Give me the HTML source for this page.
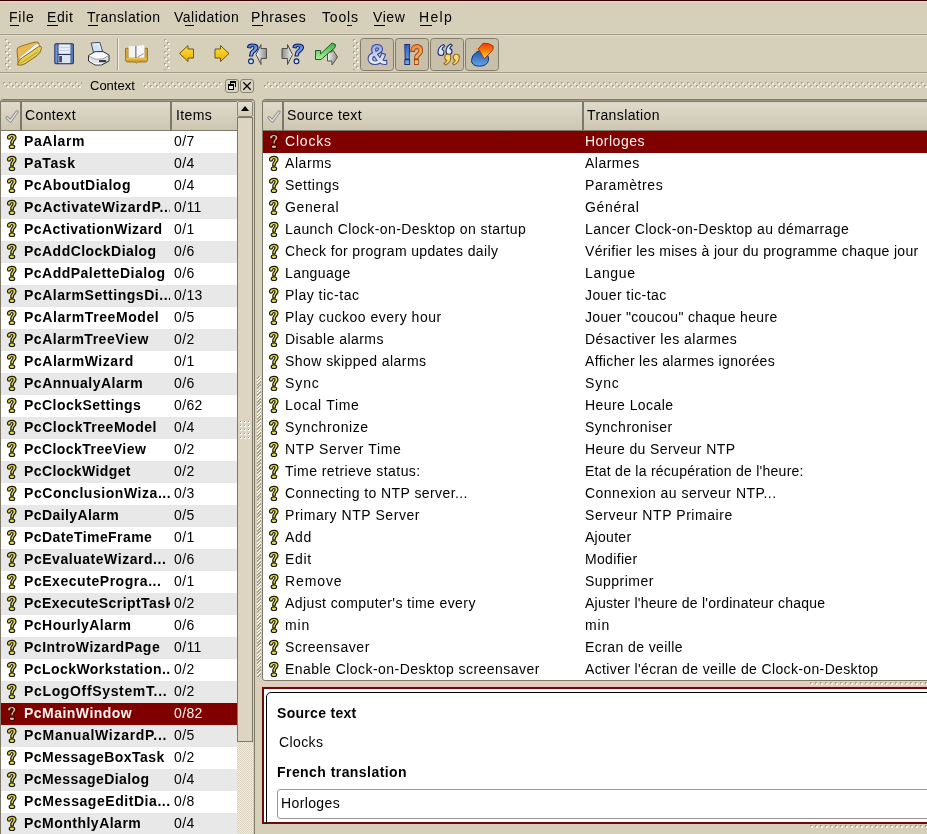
<!DOCTYPE html><html><head><meta charset="utf-8"><style>
*{box-sizing:border-box;margin:0;padding:0}
html,body{width:927px;height:834px;overflow:hidden;background:#d6cfba;font-family:"Liberation Sans",sans-serif;font-size:14px;color:#000}
.a{position:absolute}
.t{position:absolute;white-space:pre;letter-spacing:0.38px;line-height:16px}
.b{font-weight:bold;letter-spacing:0.44px}
.u{position:absolute;height:2px;background:#000}
svg{display:block}
.hd{position:absolute;background:linear-gradient(#e0dacb,#cdc6b2)}
</style></head><body><div id="root" style="position:absolute;left:0;top:0;width:927px;height:834px;overflow:hidden;background:#d6cfba;will-change:transform">
<div class="a" style="left:0;top:0px;width:927px;height:1px;background:#2e0000"></div>
<div class="a" style="left:0;top:1px;width:927px;height:1px;background:#f6d0c4"></div>
<div class="a" style="left:0;top:2px;width:927px;height:1px;background:#e8ccbc"></div>
<div class="a" style="left:0;top:3px;width:927px;height:1px;background:#dccbb8"></div>
<div class="a" style="left:0;top:4px;width:927px;height:1px;background:#d6cdb8"></div>
<div class="t" style="left:9px;top:9px;letter-spacing:0.78px">File</div>
<div class="t" style="left:47px;top:9px;letter-spacing:0.6px">Edit</div>
<div class="t" style="left:87px;top:9px;letter-spacing:0.42px">Translation</div>
<div class="t" style="left:174px;top:9px;letter-spacing:0.48px">Validation</div>
<div class="t" style="left:251px;top:9px;letter-spacing:0.55px">Phrases</div>
<div class="t" style="left:322px;top:9px;letter-spacing:0.8px">Tools</div>
<div class="t" style="left:373px;top:9px;letter-spacing:0.55px">View</div>
<div class="t" style="left:419px;top:9px;letter-spacing:1.3px">Help</div>
<div id="ul"></div>
<div class="a" style="left:0;top:33px;width:927px;height:1px;background:#dcd6c4"></div>
<div class="a" style="left:0;top:34px;width:927px;height:1px;background:#a29c88"></div>
<div class="a" style="left:0;top:35px;width:927px;height:1px;background:#e2dccb"></div>
<div class="a" style="left:0;top:72px;width:927px;height:1px;background:#a29c88"></div>
<div class="a" style="left:0;top:73px;width:927px;height:1px;background:#e2dccb"></div>
<svg class="a" style="left:0;top:0" width="927" height="99" viewBox="0 0 927 99">
<defs>
<pattern id="gripv1" x="5" y="39" width="12" height="6" patternUnits="userSpaceOnUse"><rect x="0" y="0" width="2" height="2" fill="#aaa48f"/><rect x="1" y="1" width="2" height="2" fill="#f2eee2"/><rect x="3" y="3" width="2" height="2" fill="#aaa48f"/><rect x="4" y="4" width="2" height="2" fill="#f2eee2"/></pattern>
<pattern id="gripv2" x="164" y="39" width="12" height="6" patternUnits="userSpaceOnUse"><rect x="0" y="0" width="2" height="2" fill="#aaa48f"/><rect x="1" y="1" width="2" height="2" fill="#f2eee2"/><rect x="3" y="3" width="2" height="2" fill="#aaa48f"/><rect x="4" y="4" width="2" height="2" fill="#f2eee2"/></pattern>
<pattern id="gripv3" x="353" y="39" width="12" height="6" patternUnits="userSpaceOnUse"><rect x="0" y="0" width="2" height="2" fill="#aaa48f"/><rect x="1" y="1" width="2" height="2" fill="#f2eee2"/><rect x="3" y="3" width="2" height="2" fill="#aaa48f"/><rect x="4" y="4" width="2" height="2" fill="#f2eee2"/></pattern>
<pattern id="griph" x="3" y="82" width="6" height="20" patternUnits="userSpaceOnUse"><rect x="0" y="0" width="2" height="2" fill="#aaa48f"/><rect x="1" y="1" width="2" height="2" fill="#f2eee2"/><rect x="3" y="3" width="2" height="2" fill="#aaa48f"/><rect x="4" y="4" width="2" height="2" fill="#f2eee2"/></pattern>
<linearGradient id="blueq" x1="0" y1="0" x2="0" y2="1"><stop offset="0" stop-color="#3a78e0"/><stop offset="1" stop-color="#a8c8f8"/></linearGradient>
<linearGradient id="grayar" x1="0" y1="0" x2="1" y2="0"><stop offset="0" stop-color="#f4f4f4"/><stop offset="1" stop-color="#8c8c8c"/></linearGradient>
<linearGradient id="grayar2" x1="0" y1="0" x2="1" y2="0"><stop offset="0" stop-color="#8c8c8c"/><stop offset="1" stop-color="#f4f4f4"/></linearGradient>
<linearGradient id="amp" x1="0" y1="0" x2="0" y2="1"><stop offset="0" stop-color="#7890d8"/><stop offset="0.6" stop-color="#d8e0f8"/><stop offset="1" stop-color="#ffffff"/></linearGradient>
<linearGradient id="orq" x1="0" y1="0" x2="0" y2="1"><stop offset="0" stop-color="#f07830"/><stop offset="1" stop-color="#f8e080"/></linearGradient>
<linearGradient id="blex" x1="0" y1="0" x2="0" y2="1"><stop offset="0" stop-color="#2850c0"/><stop offset="1" stop-color="#80c0f0"/></linearGradient>
<linearGradient id="paintb" x1="0" y1="0" x2="0" y2="1"><stop offset="0" stop-color="#1848a0"/><stop offset="1" stop-color="#60a8e8"/></linearGradient>
<linearGradient id="painto" x1="0" y1="0" x2="0" y2="1"><stop offset="0" stop-color="#f03800"/><stop offset="0.55" stop-color="#f88810"/><stop offset="1" stop-color="#f8e050"/></linearGradient>
<linearGradient id="greenck" x1="0" y1="0" x2="0" y2="1"><stop offset="0" stop-color="#40b048"/><stop offset="1" stop-color="#a8f0a0"/></linearGradient>
<linearGradient id="yarrow" x1="0" y1="0" x2="0" y2="1"><stop offset="0" stop-color="#f8e040"/><stop offset="1" stop-color="#f0b000"/></linearGradient>
</defs>
<!-- toolbar grips -->
<rect x="4" y="39" width="8" height="31" fill="url(#gripv1)"/>
<rect x="163" y="39" width="8" height="31" fill="url(#gripv2)"/>
<rect x="352" y="39" width="8" height="31" fill="url(#gripv3)"/>
<!-- separator -->
<rect x="117" y="38" width="1" height="32" fill="#a29c88"/><rect x="118" y="38" width="1" height="32" fill="#f4f0e4"/>
<!-- folder -->
<path d="M17 50.5 Q17 47.5 20 46.5 L33 42.5 Q37.5 41.2 38.8 43 L39.2 46 L22 60 L18.2 63.5 Z" fill="#eeb850" stroke="#8a6818" stroke-width="0.9"/>
<path d="M19.6 57.2 L35.5 44.2 Q37.6 43 38.6 44.6 L40 47.6 L22.2 61.4 Z" fill="#fbfafc" stroke="#a89878" stroke-width="0.6"/>
<path d="M17.3 64.8 Q18.2 60.5 22.2 57.8 L38.5 46.6 Q41.8 45.3 41.4 48.6 Q41 52.2 37.2 55.4 L25 63.8 Q20.5 66.2 17.3 64.8 Z" fill="#e6cf50" stroke="#7a5c10" stroke-width="0.9"/>
<path d="M19.5 63.5 Q22 62.5 25 60.5 L38 51.5" fill="none" stroke="#c8a830" stroke-width="1.2"/>
<!-- floppy -->
<rect x="54.3" y="43.2" width="19.6" height="21" rx="1.6" fill="#1e2c5e"/>
<rect x="55.3" y="44.3" width="2.3" height="19" fill="#6c96dc"/>
<rect x="58.5" y="44.3" width="12.2" height="9.6" fill="#e8eef8"/>
<rect x="58.5" y="47" width="12.2" height="1" fill="#c4d0e8"/>
<rect x="58.5" y="50" width="12.2" height="1" fill="#c4d0e8"/>
<rect x="58.5" y="55" width="12.2" height="8.2" fill="#dde4f0"/>
<rect x="59.2" y="56" width="2.8" height="6.2" fill="#4a4860"/>
<rect x="70.7" y="44.3" width="2.3" height="19" fill="#5474b4"/>
<!-- printer -->
<path d="M91.2 43 L99.8 42.3 L102.6 51.6 L93.4 52.2 Z" fill="#d0e0f8" stroke="#3a4050" stroke-width="0.9"/>
<path d="M93.5 44.5 L99 44.2 L100.5 49.5" fill="none" stroke="#f4f8ff" stroke-width="1"/>
<path d="M88.5 55.5 L95 51.8 L103 51.6 L109 55 L109 61 L101.5 65 L95 65 L88.5 61 Z" fill="#e4e4e8" stroke="#2a2e34" stroke-width="1"/>
<path d="M89.5 55.6 L95.2 52.6 L102.8 52.5 L108 55.3 L102 58.6 L95 58.8 Z" fill="#fafafc"/>
<path d="M88.8 56.2 L95 59.3 L102.8 59 L108.8 55.6" fill="none" stroke="#8a8e94" stroke-width="0.8"/>
<path d="M89.5 60.5 L95 63.8 L101.5 63.8" fill="none" stroke="#ffffff" stroke-width="1"/>
<rect x="99" y="60" width="7.2" height="2.2" fill="#3a3e44"/>
<!-- book -->
<path d="M125.5 48.5 L128.5 48 L128.5 57.5 L144.5 57.5 L144.5 48 L147.5 48.5 L147.5 60.5 Q147 62 145.5 62 L138 62 L136.5 63 L135 62 L127.5 62 Q126 62 125.5 60.5 Z" fill="#d4a430" stroke="#8a6410" stroke-width="0.8"/>
<path d="M128.5 46.2 L135.5 46 L135.5 57.8 L128.5 57.8 Z" fill="#f2f4f0"/>
<path d="M136.3 46 L141.5 45.6 L143 44.6 L144.6 47 L144.6 57.8 L136.3 57.8 Z" fill="#f8f8fa"/>
<rect x="135.3" y="46" width="1.1" height="12" fill="#6a7480"/>
<path d="M137.5 57.2 L143.8 53.6" stroke="#8a8a96" stroke-width="0.9"/>
<rect x="126" y="58" width="21" height="1.5" fill="#e8c050"/>
<!-- prev/next arrows -->
<path d="M179.5 53.5 L188 45.5 L188 49 L193.5 49 L193.5 58 L188 58 L188 61.5 Z" fill="url(#yarrow)" stroke="#705410" stroke-width="1" stroke-linejoin="round"/>
<path d="M229 53.5 L220.5 45.5 L220.5 49 L215 49 L215 58 L220.5 58 L220.5 61.5 Z" fill="url(#yarrow)" stroke="#705410" stroke-width="1" stroke-linejoin="round"/>
<!-- prev unfinished -->
<path d="M256 54.5 L261 44.5 L261 48.5 L266.5 48.5 L266.5 58.5 L261 58.5 L261 64.5 Z" fill="url(#grayar)" stroke="#505048" stroke-width="1" stroke-linejoin="round"/>
<path d="M247.5 47.5 C247.5 44.5 250 44 252.5 44 C256 44 258 45.5 258 47.5 C258 50 255.5 51.5 253.5 53 L252.5 56 L249.5 56 L250.5 52 C251.5 50 254 49.5 254 47.8 C254 46.8 253 46.5 252.3 46.5 C251 46.5 250.8 47.3 250.8 48 Z" fill="url(#blueq)" stroke="#102060" stroke-width="1.1" stroke-linejoin="round"/>
<circle cx="251" cy="61.3" r="2.4" fill="#c0e0ff" stroke="#102060" stroke-width="1.1"/>
<!-- next unfinished -->
<path d="M292.5 54.5 L287.5 44.5 L287.5 48.5 L282 48.5 L282 58.5 L287.5 58.5 L287.5 64.5 Z" fill="url(#grayar2)" stroke="#505048" stroke-width="1" stroke-linejoin="round"/>
<path d="M293 47.5 C293 44.5 295.5 44 298 44 C301.5 44 303.5 45.5 303.5 47.5 C303.5 50 301 51.5 299 53 L298 56 L295 56 L296 52 C297 50 299.5 49.5 299.5 47.8 C299.5 46.8 298.5 46.5 297.8 46.5 C296.5 46.5 296.3 47.3 296.3 48 Z" fill="url(#blueq)" stroke="#102060" stroke-width="1.1" stroke-linejoin="round"/>
<circle cx="296.5" cy="61.3" r="2.4" fill="#c0e0ff" stroke="#102060" stroke-width="1.1"/>
<!-- done and next -->
<path d="M337.5 57 L332 48.5 L332 52 L327.5 52 L327.5 61 L332 61 L332 65 Z" fill="url(#grayar)" stroke="#505048" stroke-width="1" stroke-linejoin="round"/>
<path d="M315.5 50.5 L320.5 50.5 L320.5 54 L332 43 L335.5 44.5 L335 47.5 L321 59.5 L315.5 59.5 Z" fill="url(#greenck)" stroke="#206020" stroke-width="1" stroke-linejoin="round"/>
<!-- toggle buttons -->
<rect x="360.5" y="38.5" width="33" height="32" rx="3" fill="#c9c0ac" stroke="#857d6a" stroke-width="1"/>
<rect x="395.5" y="38.5" width="33" height="32" rx="3" fill="#c9c0ac" stroke="#857d6a" stroke-width="1"/>
<rect x="430.5" y="38.5" width="33" height="32" rx="3" fill="#c9c0ac" stroke="#857d6a" stroke-width="1"/>
<rect x="465.5" y="38.5" width="33" height="32" rx="3" fill="#c9c0ac" stroke="#857d6a" stroke-width="1"/>
<text x="367.6" y="64.3" font-family="Liberation Sans" font-weight="bold" font-size="27" fill="url(#amp)" stroke="#3a4c98" stroke-width="2.2" paint-order="stroke">&amp;</text>
<text x="402.7" y="64.3" font-family="Liberation Sans" font-weight="bold" font-size="27" fill="url(#blex)" stroke="#1a3070" stroke-width="2" paint-order="stroke">!</text>
<text transform="translate(410.3 64.3) scale(0.8 1)" x="0" y="0" font-family="Liberation Sans" font-weight="bold" font-size="27" fill="url(#orq)" stroke="#a04810" stroke-width="2.2" paint-order="stroke">?</text>
<path d="M438 52.5 Q438 47 443.5 44.5 L444.8 46 Q442.3 47.5 442 49.5 Q444 50 444 52.5 Q444 55.5 441 55.5 Q438 55.5 438 52.5 Z" fill="#dde8fa" stroke="#1a3070" stroke-width="1.1" stroke-linejoin="round"/>
<path d="M446 51.5 Q446 46 451 44 L452.2 45.5 Q450 46.8 449.8 48.6 Q452 49 452 51.5 Q452 54.5 449 54.5 Q446 54.5 446 51.5 Z" fill="#dde8fa" stroke="#1a3070" stroke-width="1.1" stroke-linejoin="round"/>
<path d="M450.8 57.2 Q450.8 62.7 445.3 65 L444 63.5 Q446.5 62.2 446.8 60.2 Q444.8 59.8 444.8 57.2 Q444.8 54.2 447.8 54.2 Q450.8 54.2 450.8 57.2 Z" fill="#f8dc78" stroke="#9a6a10" stroke-width="1.1" stroke-linejoin="round"/>
<path d="M459.3 57.2 Q459.3 62.7 453.8 65 L452.5 63.5 Q455 62.2 455.3 60.2 Q453.3 59.8 453.3 57.2 Q453.3 54.2 456.3 54.2 Q459.3 54.2 459.3 57.2 Z" fill="#f8dc78" stroke="#9a6a10" stroke-width="1.1" stroke-linejoin="round"/>
<path d="M471.5 60.5 Q471.5 55.5 476 52.5 L483 48.5 L487.5 55 Q489 57.5 488.5 60 Q487.5 66 479.5 66.2 Q471.5 66 471.5 60.5 Z" fill="url(#paintb)" stroke="#1a3070" stroke-width="1"/>
<path d="M478.3 48.8 L483 43.3 Q489 42.5 493.2 46 Q494 50 490 53 L484.4 58.7 Z" fill="url(#painto)" stroke="#a03000" stroke-width="0.9" stroke-linejoin="round"/>
<circle cx="476.5" cy="49" r="0.9" fill="#f0a040"/>
<!-- dock title -->
<rect x="3" y="80" width="79" height="10" fill="url(#griph)"/>
<rect x="143" y="80" width="79" height="10" fill="url(#griph)"/>
<rect x="264" y="80" width="663" height="10" fill="url(#griph)"/>
<rect x="225.5" y="79.5" width="13" height="13" rx="2.5" fill="#d8d2c0" stroke="#8a8474" stroke-width="1"/>
<rect x="240.5" y="79.5" width="13" height="13" rx="2.5" fill="#d8d2c0" stroke="#8a8474" stroke-width="1"/>
<rect x="230" y="81" width="6" height="2" fill="#000"/><rect x="235" y="81" width="1" height="6" fill="#000"/><rect x="230" y="81" width="1" height="3" fill="#000"/>
<rect x="228" y="84" width="6" height="6" fill="#ece8dc"/>
<rect x="228" y="84" width="6" height="2" fill="#000"/><rect x="228" y="84" width="1" height="6" fill="#000"/><rect x="233" y="84" width="1" height="6" fill="#000"/><rect x="228" y="89" width="6" height="1" fill="#000"/>
<path d="M243.3 82.3 L250.7 89.7 M250.7 82.3 L243.3 89.7" stroke="#000" stroke-width="1.25"/>
</svg>
<div class="t" style="left:90px;top:78px;font-size:13px;letter-spacing:0">Context</div>
<div class="a" style="left:10px;top:25px;width:9px;height:1px;background:#000"></div>
<div class="a" style="left:47px;top:25px;width:11px;height:1px;background:#000"></div>
<div class="a" style="left:88px;top:25px;width:10px;height:1px;background:#000"></div>
<div class="a" style="left:185px;top:25px;width:9px;height:1px;background:#000"></div>
<div class="a" style="left:252px;top:25px;width:11px;height:1px;background:#000"></div>
<div class="a" style="left:347px;top:25px;width:5px;height:1px;background:#000"></div>
<div class="a" style="left:374px;top:25px;width:11px;height:1px;background:#000"></div>
<div class="a" style="left:420px;top:25px;width:12px;height:1px;background:#000"></div>
<div class="a" style="left:0;top:99px;width:255px;height:760px;border:1px solid #7d7868;border-radius:3px;background:#fff"></div>
<div class="a" style="left:1px;top:100px;width:252px;height:1px;background:#a29a88"></div>
<div class="a" style="left:1px;top:101px;width:236px;height:1px;background:#7d7868"></div>
<div class="hd" style="left:1px;top:102px;width:236px;height:28px"></div>
<div class="a" style="left:1px;top:130px;width:236px;height:1px;background:#7d7868"></div>
<div class="a" style="left:20px;top:101px;width:2px;height:30px;background:#7d7868"></div>
<div class="a" style="left:170px;top:101px;width:2px;height:30px;background:#7d7868"></div>
<div class="t" style="left:25px;top:107px">Context</div>
<div class="t" style="left:176px;top:107px">Items</div>
<div class="a" style="left:5px;top:110px"><svg width="14" height="14" viewBox="0 0 14 14"><path d="M2 7.6 L5.3 11 L12 1.9" fill="none" stroke="#8a8a8a" stroke-width="3.2" stroke-linejoin="round" stroke-linecap="round"/><path d="M2 7.6 L5.3 11 L12 1.9" fill="none" stroke="#e6e6e6" stroke-width="1.3" stroke-linejoin="round" stroke-linecap="round"/></svg></div>
<div class="a" style="left:1px;top:131px;width:236px;height:22px;background:#ffffff"></div>
<div class="a" style="left:6px;top:133px;width:11px;height:16px"><svg class="q" width="11" height="16" viewBox="0 0 11 16"><path d="M1.5 4.7 C1.3 2.6 3.5 1.3 6 1.3 C8.6 1.3 10 2.7 10 4.5 C10 6.5 8.3 7.4 7.6 8.6 L7.1 11.2 L4.8 11.2 L4.9 8.6 C5.2 7 7 6.1 7 4.7 C7 3.9 6.5 3.5 5.9 3.5 C5.1 3.5 4.8 4.1 4.7 4.7 C4.5 5.7 3.7 6.1 2.9 6.1 C2.1 6.1 1.6 5.5 1.5 4.7 Z" fill="#e4dc5c" stroke="#1e1a00" stroke-width="1.2" stroke-linejoin="round"/><ellipse cx="5.95" cy="13.85" rx="2.75" ry="1.85" fill="#e4dc5c" stroke="#1e1a00" stroke-width="1.2"/></svg></div>
<div class="a" style="left:24px;top:133px;width:146px;height:18px;overflow:hidden"><div class="t b" style="left:0;top:0;color:#000;letter-spacing:0.617px">PaAlarm</div></div>
<div class="t" style="left:174px;top:133px;color:#000">0/7</div>
<div class="a" style="left:1px;top:153px;width:236px;height:22px;background:#e8e8e8"></div>
<div class="a" style="left:6px;top:155px;width:11px;height:16px"><svg class="q" width="11" height="16" viewBox="0 0 11 16"><path d="M1.5 4.7 C1.3 2.6 3.5 1.3 6 1.3 C8.6 1.3 10 2.7 10 4.5 C10 6.5 8.3 7.4 7.6 8.6 L7.1 11.2 L4.8 11.2 L4.9 8.6 C5.2 7 7 6.1 7 4.7 C7 3.9 6.5 3.5 5.9 3.5 C5.1 3.5 4.8 4.1 4.7 4.7 C4.5 5.7 3.7 6.1 2.9 6.1 C2.1 6.1 1.6 5.5 1.5 4.7 Z" fill="#e4dc5c" stroke="#1e1a00" stroke-width="1.2" stroke-linejoin="round"/><ellipse cx="5.95" cy="13.85" rx="2.75" ry="1.85" fill="#e4dc5c" stroke="#1e1a00" stroke-width="1.2"/></svg></div>
<div class="a" style="left:24px;top:155px;width:146px;height:18px;overflow:hidden"><div class="t b" style="left:0;top:0;color:#000;letter-spacing:0.6px">PaTask</div></div>
<div class="t" style="left:174px;top:155px;color:#000">0/4</div>
<div class="a" style="left:1px;top:175px;width:236px;height:22px;background:#ffffff"></div>
<div class="a" style="left:6px;top:177px;width:11px;height:16px"><svg class="q" width="11" height="16" viewBox="0 0 11 16"><path d="M1.5 4.7 C1.3 2.6 3.5 1.3 6 1.3 C8.6 1.3 10 2.7 10 4.5 C10 6.5 8.3 7.4 7.6 8.6 L7.1 11.2 L4.8 11.2 L4.9 8.6 C5.2 7 7 6.1 7 4.7 C7 3.9 6.5 3.5 5.9 3.5 C5.1 3.5 4.8 4.1 4.7 4.7 C4.5 5.7 3.7 6.1 2.9 6.1 C2.1 6.1 1.6 5.5 1.5 4.7 Z" fill="#e4dc5c" stroke="#1e1a00" stroke-width="1.2" stroke-linejoin="round"/><ellipse cx="5.95" cy="13.85" rx="2.75" ry="1.85" fill="#e4dc5c" stroke="#1e1a00" stroke-width="1.2"/></svg></div>
<div class="a" style="left:24px;top:177px;width:146px;height:18px;overflow:hidden"><div class="t b" style="left:0;top:0;color:#000;letter-spacing:0.508px">PcAboutDialog</div></div>
<div class="t" style="left:174px;top:177px;color:#000">0/4</div>
<div class="a" style="left:1px;top:197px;width:236px;height:22px;background:#e8e8e8"></div>
<div class="a" style="left:6px;top:199px;width:11px;height:16px"><svg class="q" width="11" height="16" viewBox="0 0 11 16"><path d="M1.5 4.7 C1.3 2.6 3.5 1.3 6 1.3 C8.6 1.3 10 2.7 10 4.5 C10 6.5 8.3 7.4 7.6 8.6 L7.1 11.2 L4.8 11.2 L4.9 8.6 C5.2 7 7 6.1 7 4.7 C7 3.9 6.5 3.5 5.9 3.5 C5.1 3.5 4.8 4.1 4.7 4.7 C4.5 5.7 3.7 6.1 2.9 6.1 C2.1 6.1 1.6 5.5 1.5 4.7 Z" fill="#e4dc5c" stroke="#1e1a00" stroke-width="1.2" stroke-linejoin="round"/><ellipse cx="5.95" cy="13.85" rx="2.75" ry="1.85" fill="#e4dc5c" stroke="#1e1a00" stroke-width="1.2"/></svg></div>
<div class="a" style="left:24px;top:199px;width:146px;height:18px;overflow:hidden"><div class="t b" style="left:0;top:0;color:#000;letter-spacing:0.626px">PcActivateWizardP...</div></div>
<div class="t" style="left:174px;top:199px;color:#000">0/11</div>
<div class="a" style="left:1px;top:219px;width:236px;height:22px;background:#ffffff"></div>
<div class="a" style="left:6px;top:221px;width:11px;height:16px"><svg class="q" width="11" height="16" viewBox="0 0 11 16"><path d="M1.5 4.7 C1.3 2.6 3.5 1.3 6 1.3 C8.6 1.3 10 2.7 10 4.5 C10 6.5 8.3 7.4 7.6 8.6 L7.1 11.2 L4.8 11.2 L4.9 8.6 C5.2 7 7 6.1 7 4.7 C7 3.9 6.5 3.5 5.9 3.5 C5.1 3.5 4.8 4.1 4.7 4.7 C4.5 5.7 3.7 6.1 2.9 6.1 C2.1 6.1 1.6 5.5 1.5 4.7 Z" fill="#e4dc5c" stroke="#1e1a00" stroke-width="1.2" stroke-linejoin="round"/><ellipse cx="5.95" cy="13.85" rx="2.75" ry="1.85" fill="#e4dc5c" stroke="#1e1a00" stroke-width="1.2"/></svg></div>
<div class="a" style="left:24px;top:221px;width:146px;height:18px;overflow:hidden"><div class="t b" style="left:0;top:0;color:#000;letter-spacing:0.447px">PcActivationWizard</div></div>
<div class="t" style="left:174px;top:221px;color:#000">0/1</div>
<div class="a" style="left:1px;top:241px;width:236px;height:22px;background:#e8e8e8"></div>
<div class="a" style="left:6px;top:243px;width:11px;height:16px"><svg class="q" width="11" height="16" viewBox="0 0 11 16"><path d="M1.5 4.7 C1.3 2.6 3.5 1.3 6 1.3 C8.6 1.3 10 2.7 10 4.5 C10 6.5 8.3 7.4 7.6 8.6 L7.1 11.2 L4.8 11.2 L4.9 8.6 C5.2 7 7 6.1 7 4.7 C7 3.9 6.5 3.5 5.9 3.5 C5.1 3.5 4.8 4.1 4.7 4.7 C4.5 5.7 3.7 6.1 2.9 6.1 C2.1 6.1 1.6 5.5 1.5 4.7 Z" fill="#e4dc5c" stroke="#1e1a00" stroke-width="1.2" stroke-linejoin="round"/><ellipse cx="5.95" cy="13.85" rx="2.75" ry="1.85" fill="#e4dc5c" stroke="#1e1a00" stroke-width="1.2"/></svg></div>
<div class="a" style="left:24px;top:243px;width:146px;height:18px;overflow:hidden"><div class="t b" style="left:0;top:0;color:#000;letter-spacing:0.46px">PcAddClockDialog</div></div>
<div class="t" style="left:174px;top:243px;color:#000">0/6</div>
<div class="a" style="left:1px;top:263px;width:236px;height:22px;background:#ffffff"></div>
<div class="a" style="left:6px;top:265px;width:11px;height:16px"><svg class="q" width="11" height="16" viewBox="0 0 11 16"><path d="M1.5 4.7 C1.3 2.6 3.5 1.3 6 1.3 C8.6 1.3 10 2.7 10 4.5 C10 6.5 8.3 7.4 7.6 8.6 L7.1 11.2 L4.8 11.2 L4.9 8.6 C5.2 7 7 6.1 7 4.7 C7 3.9 6.5 3.5 5.9 3.5 C5.1 3.5 4.8 4.1 4.7 4.7 C4.5 5.7 3.7 6.1 2.9 6.1 C2.1 6.1 1.6 5.5 1.5 4.7 Z" fill="#e4dc5c" stroke="#1e1a00" stroke-width="1.2" stroke-linejoin="round"/><ellipse cx="5.95" cy="13.85" rx="2.75" ry="1.85" fill="#e4dc5c" stroke="#1e1a00" stroke-width="1.2"/></svg></div>
<div class="a" style="left:24px;top:265px;width:146px;height:18px;overflow:hidden"><div class="t b" style="left:0;top:0;color:#000;letter-spacing:0.476px">PcAddPaletteDialog</div></div>
<div class="t" style="left:174px;top:265px;color:#000">0/6</div>
<div class="a" style="left:1px;top:285px;width:236px;height:22px;background:#e8e8e8"></div>
<div class="a" style="left:6px;top:287px;width:11px;height:16px"><svg class="q" width="11" height="16" viewBox="0 0 11 16"><path d="M1.5 4.7 C1.3 2.6 3.5 1.3 6 1.3 C8.6 1.3 10 2.7 10 4.5 C10 6.5 8.3 7.4 7.6 8.6 L7.1 11.2 L4.8 11.2 L4.9 8.6 C5.2 7 7 6.1 7 4.7 C7 3.9 6.5 3.5 5.9 3.5 C5.1 3.5 4.8 4.1 4.7 4.7 C4.5 5.7 3.7 6.1 2.9 6.1 C2.1 6.1 1.6 5.5 1.5 4.7 Z" fill="#e4dc5c" stroke="#1e1a00" stroke-width="1.2" stroke-linejoin="round"/><ellipse cx="5.95" cy="13.85" rx="2.75" ry="1.85" fill="#e4dc5c" stroke="#1e1a00" stroke-width="1.2"/></svg></div>
<div class="a" style="left:24px;top:287px;width:146px;height:18px;overflow:hidden"><div class="t b" style="left:0;top:0;color:#000;letter-spacing:0.542px">PcAlarmSettingsDi...</div></div>
<div class="t" style="left:174px;top:287px;color:#000">0/13</div>
<div class="a" style="left:1px;top:307px;width:236px;height:22px;background:#ffffff"></div>
<div class="a" style="left:6px;top:309px;width:11px;height:16px"><svg class="q" width="11" height="16" viewBox="0 0 11 16"><path d="M1.5 4.7 C1.3 2.6 3.5 1.3 6 1.3 C8.6 1.3 10 2.7 10 4.5 C10 6.5 8.3 7.4 7.6 8.6 L7.1 11.2 L4.8 11.2 L4.9 8.6 C5.2 7 7 6.1 7 4.7 C7 3.9 6.5 3.5 5.9 3.5 C5.1 3.5 4.8 4.1 4.7 4.7 C4.5 5.7 3.7 6.1 2.9 6.1 C2.1 6.1 1.6 5.5 1.5 4.7 Z" fill="#e4dc5c" stroke="#1e1a00" stroke-width="1.2" stroke-linejoin="round"/><ellipse cx="5.95" cy="13.85" rx="2.75" ry="1.85" fill="#e4dc5c" stroke="#1e1a00" stroke-width="1.2"/></svg></div>
<div class="a" style="left:24px;top:309px;width:146px;height:18px;overflow:hidden"><div class="t b" style="left:0;top:0;color:#000;letter-spacing:0.58px">PcAlarmTreeModel</div></div>
<div class="t" style="left:174px;top:309px;color:#000">0/5</div>
<div class="a" style="left:1px;top:329px;width:236px;height:22px;background:#e8e8e8"></div>
<div class="a" style="left:6px;top:331px;width:11px;height:16px"><svg class="q" width="11" height="16" viewBox="0 0 11 16"><path d="M1.5 4.7 C1.3 2.6 3.5 1.3 6 1.3 C8.6 1.3 10 2.7 10 4.5 C10 6.5 8.3 7.4 7.6 8.6 L7.1 11.2 L4.8 11.2 L4.9 8.6 C5.2 7 7 6.1 7 4.7 C7 3.9 6.5 3.5 5.9 3.5 C5.1 3.5 4.8 4.1 4.7 4.7 C4.5 5.7 3.7 6.1 2.9 6.1 C2.1 6.1 1.6 5.5 1.5 4.7 Z" fill="#e4dc5c" stroke="#1e1a00" stroke-width="1.2" stroke-linejoin="round"/><ellipse cx="5.95" cy="13.85" rx="2.75" ry="1.85" fill="#e4dc5c" stroke="#1e1a00" stroke-width="1.2"/></svg></div>
<div class="a" style="left:24px;top:331px;width:146px;height:18px;overflow:hidden"><div class="t b" style="left:0;top:0;color:#000;letter-spacing:0.507px">PcAlarmTreeView</div></div>
<div class="t" style="left:174px;top:331px;color:#000">0/2</div>
<div class="a" style="left:1px;top:351px;width:236px;height:22px;background:#ffffff"></div>
<div class="a" style="left:6px;top:353px;width:11px;height:16px"><svg class="q" width="11" height="16" viewBox="0 0 11 16"><path d="M1.5 4.7 C1.3 2.6 3.5 1.3 6 1.3 C8.6 1.3 10 2.7 10 4.5 C10 6.5 8.3 7.4 7.6 8.6 L7.1 11.2 L4.8 11.2 L4.9 8.6 C5.2 7 7 6.1 7 4.7 C7 3.9 6.5 3.5 5.9 3.5 C5.1 3.5 4.8 4.1 4.7 4.7 C4.5 5.7 3.7 6.1 2.9 6.1 C2.1 6.1 1.6 5.5 1.5 4.7 Z" fill="#e4dc5c" stroke="#1e1a00" stroke-width="1.2" stroke-linejoin="round"/><ellipse cx="5.95" cy="13.85" rx="2.75" ry="1.85" fill="#e4dc5c" stroke="#1e1a00" stroke-width="1.2"/></svg></div>
<div class="a" style="left:24px;top:353px;width:146px;height:18px;overflow:hidden"><div class="t b" style="left:0;top:0;color:#000;letter-spacing:0.558px">PcAlarmWizard</div></div>
<div class="t" style="left:174px;top:353px;color:#000">0/1</div>
<div class="a" style="left:1px;top:373px;width:236px;height:22px;background:#e8e8e8"></div>
<div class="a" style="left:6px;top:375px;width:11px;height:16px"><svg class="q" width="11" height="16" viewBox="0 0 11 16"><path d="M1.5 4.7 C1.3 2.6 3.5 1.3 6 1.3 C8.6 1.3 10 2.7 10 4.5 C10 6.5 8.3 7.4 7.6 8.6 L7.1 11.2 L4.8 11.2 L4.9 8.6 C5.2 7 7 6.1 7 4.7 C7 3.9 6.5 3.5 5.9 3.5 C5.1 3.5 4.8 4.1 4.7 4.7 C4.5 5.7 3.7 6.1 2.9 6.1 C2.1 6.1 1.6 5.5 1.5 4.7 Z" fill="#e4dc5c" stroke="#1e1a00" stroke-width="1.2" stroke-linejoin="round"/><ellipse cx="5.95" cy="13.85" rx="2.75" ry="1.85" fill="#e4dc5c" stroke="#1e1a00" stroke-width="1.2"/></svg></div>
<div class="a" style="left:24px;top:375px;width:146px;height:18px;overflow:hidden"><div class="t b" style="left:0;top:0;color:#000;letter-spacing:0.515px">PcAnnualyAlarm</div></div>
<div class="t" style="left:174px;top:375px;color:#000">0/6</div>
<div class="a" style="left:1px;top:395px;width:236px;height:22px;background:#ffffff"></div>
<div class="a" style="left:6px;top:397px;width:11px;height:16px"><svg class="q" width="11" height="16" viewBox="0 0 11 16"><path d="M1.5 4.7 C1.3 2.6 3.5 1.3 6 1.3 C8.6 1.3 10 2.7 10 4.5 C10 6.5 8.3 7.4 7.6 8.6 L7.1 11.2 L4.8 11.2 L4.9 8.6 C5.2 7 7 6.1 7 4.7 C7 3.9 6.5 3.5 5.9 3.5 C5.1 3.5 4.8 4.1 4.7 4.7 C4.5 5.7 3.7 6.1 2.9 6.1 C2.1 6.1 1.6 5.5 1.5 4.7 Z" fill="#e4dc5c" stroke="#1e1a00" stroke-width="1.2" stroke-linejoin="round"/><ellipse cx="5.95" cy="13.85" rx="2.75" ry="1.85" fill="#e4dc5c" stroke="#1e1a00" stroke-width="1.2"/></svg></div>
<div class="a" style="left:24px;top:397px;width:146px;height:18px;overflow:hidden"><div class="t b" style="left:0;top:0;color:#000;letter-spacing:0.45px">PcClockSettings</div></div>
<div class="t" style="left:174px;top:397px;color:#000">0/62</div>
<div class="a" style="left:1px;top:417px;width:236px;height:22px;background:#e8e8e8"></div>
<div class="a" style="left:6px;top:419px;width:11px;height:16px"><svg class="q" width="11" height="16" viewBox="0 0 11 16"><path d="M1.5 4.7 C1.3 2.6 3.5 1.3 6 1.3 C8.6 1.3 10 2.7 10 4.5 C10 6.5 8.3 7.4 7.6 8.6 L7.1 11.2 L4.8 11.2 L4.9 8.6 C5.2 7 7 6.1 7 4.7 C7 3.9 6.5 3.5 5.9 3.5 C5.1 3.5 4.8 4.1 4.7 4.7 C4.5 5.7 3.7 6.1 2.9 6.1 C2.1 6.1 1.6 5.5 1.5 4.7 Z" fill="#e4dc5c" stroke="#1e1a00" stroke-width="1.2" stroke-linejoin="round"/><ellipse cx="5.95" cy="13.85" rx="2.75" ry="1.85" fill="#e4dc5c" stroke="#1e1a00" stroke-width="1.2"/></svg></div>
<div class="a" style="left:24px;top:419px;width:146px;height:18px;overflow:hidden"><div class="t b" style="left:0;top:0;color:#000;letter-spacing:0.533px">PcClockTreeModel</div></div>
<div class="t" style="left:174px;top:419px;color:#000">0/4</div>
<div class="a" style="left:1px;top:439px;width:236px;height:22px;background:#ffffff"></div>
<div class="a" style="left:6px;top:441px;width:11px;height:16px"><svg class="q" width="11" height="16" viewBox="0 0 11 16"><path d="M1.5 4.7 C1.3 2.6 3.5 1.3 6 1.3 C8.6 1.3 10 2.7 10 4.5 C10 6.5 8.3 7.4 7.6 8.6 L7.1 11.2 L4.8 11.2 L4.9 8.6 C5.2 7 7 6.1 7 4.7 C7 3.9 6.5 3.5 5.9 3.5 C5.1 3.5 4.8 4.1 4.7 4.7 C4.5 5.7 3.7 6.1 2.9 6.1 C2.1 6.1 1.6 5.5 1.5 4.7 Z" fill="#e4dc5c" stroke="#1e1a00" stroke-width="1.2" stroke-linejoin="round"/><ellipse cx="5.95" cy="13.85" rx="2.75" ry="1.85" fill="#e4dc5c" stroke="#1e1a00" stroke-width="1.2"/></svg></div>
<div class="a" style="left:24px;top:441px;width:146px;height:18px;overflow:hidden"><div class="t b" style="left:0;top:0;color:#000;letter-spacing:0.436px">PcClockTreeView</div></div>
<div class="t" style="left:174px;top:441px;color:#000">0/2</div>
<div class="a" style="left:1px;top:461px;width:236px;height:22px;background:#e8e8e8"></div>
<div class="a" style="left:6px;top:463px;width:11px;height:16px"><svg class="q" width="11" height="16" viewBox="0 0 11 16"><path d="M1.5 4.7 C1.3 2.6 3.5 1.3 6 1.3 C8.6 1.3 10 2.7 10 4.5 C10 6.5 8.3 7.4 7.6 8.6 L7.1 11.2 L4.8 11.2 L4.9 8.6 C5.2 7 7 6.1 7 4.7 C7 3.9 6.5 3.5 5.9 3.5 C5.1 3.5 4.8 4.1 4.7 4.7 C4.5 5.7 3.7 6.1 2.9 6.1 C2.1 6.1 1.6 5.5 1.5 4.7 Z" fill="#e4dc5c" stroke="#1e1a00" stroke-width="1.2" stroke-linejoin="round"/><ellipse cx="5.95" cy="13.85" rx="2.75" ry="1.85" fill="#e4dc5c" stroke="#1e1a00" stroke-width="1.2"/></svg></div>
<div class="a" style="left:24px;top:463px;width:146px;height:18px;overflow:hidden"><div class="t b" style="left:0;top:0;color:#000;letter-spacing:0.392px">PcClockWidget</div></div>
<div class="t" style="left:174px;top:463px;color:#000">0/2</div>
<div class="a" style="left:1px;top:483px;width:236px;height:22px;background:#ffffff"></div>
<div class="a" style="left:6px;top:485px;width:11px;height:16px"><svg class="q" width="11" height="16" viewBox="0 0 11 16"><path d="M1.5 4.7 C1.3 2.6 3.5 1.3 6 1.3 C8.6 1.3 10 2.7 10 4.5 C10 6.5 8.3 7.4 7.6 8.6 L7.1 11.2 L4.8 11.2 L4.9 8.6 C5.2 7 7 6.1 7 4.7 C7 3.9 6.5 3.5 5.9 3.5 C5.1 3.5 4.8 4.1 4.7 4.7 C4.5 5.7 3.7 6.1 2.9 6.1 C2.1 6.1 1.6 5.5 1.5 4.7 Z" fill="#e4dc5c" stroke="#1e1a00" stroke-width="1.2" stroke-linejoin="round"/><ellipse cx="5.95" cy="13.85" rx="2.75" ry="1.85" fill="#e4dc5c" stroke="#1e1a00" stroke-width="1.2"/></svg></div>
<div class="a" style="left:24px;top:485px;width:146px;height:18px;overflow:hidden"><div class="t b" style="left:0;top:0;color:#000;letter-spacing:0.55px">PcConclusionWiza...</div></div>
<div class="t" style="left:174px;top:485px;color:#000">0/3</div>
<div class="a" style="left:1px;top:505px;width:236px;height:22px;background:#e8e8e8"></div>
<div class="a" style="left:6px;top:507px;width:11px;height:16px"><svg class="q" width="11" height="16" viewBox="0 0 11 16"><path d="M1.5 4.7 C1.3 2.6 3.5 1.3 6 1.3 C8.6 1.3 10 2.7 10 4.5 C10 6.5 8.3 7.4 7.6 8.6 L7.1 11.2 L4.8 11.2 L4.9 8.6 C5.2 7 7 6.1 7 4.7 C7 3.9 6.5 3.5 5.9 3.5 C5.1 3.5 4.8 4.1 4.7 4.7 C4.5 5.7 3.7 6.1 2.9 6.1 C2.1 6.1 1.6 5.5 1.5 4.7 Z" fill="#e4dc5c" stroke="#1e1a00" stroke-width="1.2" stroke-linejoin="round"/><ellipse cx="5.95" cy="13.85" rx="2.75" ry="1.85" fill="#e4dc5c" stroke="#1e1a00" stroke-width="1.2"/></svg></div>
<div class="a" style="left:24px;top:507px;width:146px;height:18px;overflow:hidden"><div class="t b" style="left:0;top:0;color:#000;letter-spacing:0.409px">PcDailyAlarm</div></div>
<div class="t" style="left:174px;top:507px;color:#000">0/5</div>
<div class="a" style="left:1px;top:527px;width:236px;height:22px;background:#ffffff"></div>
<div class="a" style="left:6px;top:529px;width:11px;height:16px"><svg class="q" width="11" height="16" viewBox="0 0 11 16"><path d="M1.5 4.7 C1.3 2.6 3.5 1.3 6 1.3 C8.6 1.3 10 2.7 10 4.5 C10 6.5 8.3 7.4 7.6 8.6 L7.1 11.2 L4.8 11.2 L4.9 8.6 C5.2 7 7 6.1 7 4.7 C7 3.9 6.5 3.5 5.9 3.5 C5.1 3.5 4.8 4.1 4.7 4.7 C4.5 5.7 3.7 6.1 2.9 6.1 C2.1 6.1 1.6 5.5 1.5 4.7 Z" fill="#e4dc5c" stroke="#1e1a00" stroke-width="1.2" stroke-linejoin="round"/><ellipse cx="5.95" cy="13.85" rx="2.75" ry="1.85" fill="#e4dc5c" stroke="#1e1a00" stroke-width="1.2"/></svg></div>
<div class="a" style="left:24px;top:529px;width:146px;height:18px;overflow:hidden"><div class="t b" style="left:0;top:0;color:#000;letter-spacing:0.421px">PcDateTimeFrame</div></div>
<div class="t" style="left:174px;top:529px;color:#000">0/1</div>
<div class="a" style="left:1px;top:549px;width:236px;height:22px;background:#e8e8e8"></div>
<div class="a" style="left:6px;top:551px;width:11px;height:16px"><svg class="q" width="11" height="16" viewBox="0 0 11 16"><path d="M1.5 4.7 C1.3 2.6 3.5 1.3 6 1.3 C8.6 1.3 10 2.7 10 4.5 C10 6.5 8.3 7.4 7.6 8.6 L7.1 11.2 L4.8 11.2 L4.9 8.6 C5.2 7 7 6.1 7 4.7 C7 3.9 6.5 3.5 5.9 3.5 C5.1 3.5 4.8 4.1 4.7 4.7 C4.5 5.7 3.7 6.1 2.9 6.1 C2.1 6.1 1.6 5.5 1.5 4.7 Z" fill="#e4dc5c" stroke="#1e1a00" stroke-width="1.2" stroke-linejoin="round"/><ellipse cx="5.95" cy="13.85" rx="2.75" ry="1.85" fill="#e4dc5c" stroke="#1e1a00" stroke-width="1.2"/></svg></div>
<div class="a" style="left:24px;top:551px;width:146px;height:18px;overflow:hidden"><div class="t b" style="left:0;top:0;color:#000;letter-spacing:0.539px">PcEvaluateWizard...</div></div>
<div class="t" style="left:174px;top:551px;color:#000">0/6</div>
<div class="a" style="left:1px;top:571px;width:236px;height:22px;background:#ffffff"></div>
<div class="a" style="left:6px;top:573px;width:11px;height:16px"><svg class="q" width="11" height="16" viewBox="0 0 11 16"><path d="M1.5 4.7 C1.3 2.6 3.5 1.3 6 1.3 C8.6 1.3 10 2.7 10 4.5 C10 6.5 8.3 7.4 7.6 8.6 L7.1 11.2 L4.8 11.2 L4.9 8.6 C5.2 7 7 6.1 7 4.7 C7 3.9 6.5 3.5 5.9 3.5 C5.1 3.5 4.8 4.1 4.7 4.7 C4.5 5.7 3.7 6.1 2.9 6.1 C2.1 6.1 1.6 5.5 1.5 4.7 Z" fill="#e4dc5c" stroke="#1e1a00" stroke-width="1.2" stroke-linejoin="round"/><ellipse cx="5.95" cy="13.85" rx="2.75" ry="1.85" fill="#e4dc5c" stroke="#1e1a00" stroke-width="1.2"/></svg></div>
<div class="a" style="left:24px;top:573px;width:146px;height:18px;overflow:hidden"><div class="t b" style="left:0;top:0;color:#000;letter-spacing:0.547px">PcExecuteProgra...</div></div>
<div class="t" style="left:174px;top:573px;color:#000">0/1</div>
<div class="a" style="left:1px;top:593px;width:236px;height:22px;background:#e8e8e8"></div>
<div class="a" style="left:6px;top:595px;width:11px;height:16px"><svg class="q" width="11" height="16" viewBox="0 0 11 16"><path d="M1.5 4.7 C1.3 2.6 3.5 1.3 6 1.3 C8.6 1.3 10 2.7 10 4.5 C10 6.5 8.3 7.4 7.6 8.6 L7.1 11.2 L4.8 11.2 L4.9 8.6 C5.2 7 7 6.1 7 4.7 C7 3.9 6.5 3.5 5.9 3.5 C5.1 3.5 4.8 4.1 4.7 4.7 C4.5 5.7 3.7 6.1 2.9 6.1 C2.1 6.1 1.6 5.5 1.5 4.7 Z" fill="#e4dc5c" stroke="#1e1a00" stroke-width="1.2" stroke-linejoin="round"/><ellipse cx="5.95" cy="13.85" rx="2.75" ry="1.85" fill="#e4dc5c" stroke="#1e1a00" stroke-width="1.2"/></svg></div>
<div class="a" style="left:24px;top:595px;width:146px;height:18px;overflow:hidden"><div class="t b" style="left:0;top:0;color:#000;letter-spacing:0.44px">PcExecuteScriptTask</div></div>
<div class="t" style="left:174px;top:595px;color:#000">0/2</div>
<div class="a" style="left:1px;top:615px;width:236px;height:22px;background:#ffffff"></div>
<div class="a" style="left:6px;top:617px;width:11px;height:16px"><svg class="q" width="11" height="16" viewBox="0 0 11 16"><path d="M1.5 4.7 C1.3 2.6 3.5 1.3 6 1.3 C8.6 1.3 10 2.7 10 4.5 C10 6.5 8.3 7.4 7.6 8.6 L7.1 11.2 L4.8 11.2 L4.9 8.6 C5.2 7 7 6.1 7 4.7 C7 3.9 6.5 3.5 5.9 3.5 C5.1 3.5 4.8 4.1 4.7 4.7 C4.5 5.7 3.7 6.1 2.9 6.1 C2.1 6.1 1.6 5.5 1.5 4.7 Z" fill="#e4dc5c" stroke="#1e1a00" stroke-width="1.2" stroke-linejoin="round"/><ellipse cx="5.95" cy="13.85" rx="2.75" ry="1.85" fill="#e4dc5c" stroke="#1e1a00" stroke-width="1.2"/></svg></div>
<div class="a" style="left:24px;top:617px;width:146px;height:18px;overflow:hidden"><div class="t b" style="left:0;top:0;color:#000;letter-spacing:0.475px">PcHourlyAlarm</div></div>
<div class="t" style="left:174px;top:617px;color:#000">0/6</div>
<div class="a" style="left:1px;top:637px;width:236px;height:22px;background:#e8e8e8"></div>
<div class="a" style="left:6px;top:639px;width:11px;height:16px"><svg class="q" width="11" height="16" viewBox="0 0 11 16"><path d="M1.5 4.7 C1.3 2.6 3.5 1.3 6 1.3 C8.6 1.3 10 2.7 10 4.5 C10 6.5 8.3 7.4 7.6 8.6 L7.1 11.2 L4.8 11.2 L4.9 8.6 C5.2 7 7 6.1 7 4.7 C7 3.9 6.5 3.5 5.9 3.5 C5.1 3.5 4.8 4.1 4.7 4.7 C4.5 5.7 3.7 6.1 2.9 6.1 C2.1 6.1 1.6 5.5 1.5 4.7 Z" fill="#e4dc5c" stroke="#1e1a00" stroke-width="1.2" stroke-linejoin="round"/><ellipse cx="5.95" cy="13.85" rx="2.75" ry="1.85" fill="#e4dc5c" stroke="#1e1a00" stroke-width="1.2"/></svg></div>
<div class="a" style="left:24px;top:639px;width:146px;height:18px;overflow:hidden"><div class="t b" style="left:0;top:0;color:#000;letter-spacing:0.513px">PcIntroWizardPage</div></div>
<div class="t" style="left:174px;top:639px;color:#000">0/11</div>
<div class="a" style="left:1px;top:659px;width:236px;height:22px;background:#ffffff"></div>
<div class="a" style="left:6px;top:661px;width:11px;height:16px"><svg class="q" width="11" height="16" viewBox="0 0 11 16"><path d="M1.5 4.7 C1.3 2.6 3.5 1.3 6 1.3 C8.6 1.3 10 2.7 10 4.5 C10 6.5 8.3 7.4 7.6 8.6 L7.1 11.2 L4.8 11.2 L4.9 8.6 C5.2 7 7 6.1 7 4.7 C7 3.9 6.5 3.5 5.9 3.5 C5.1 3.5 4.8 4.1 4.7 4.7 C4.5 5.7 3.7 6.1 2.9 6.1 C2.1 6.1 1.6 5.5 1.5 4.7 Z" fill="#e4dc5c" stroke="#1e1a00" stroke-width="1.2" stroke-linejoin="round"/><ellipse cx="5.95" cy="13.85" rx="2.75" ry="1.85" fill="#e4dc5c" stroke="#1e1a00" stroke-width="1.2"/></svg></div>
<div class="a" style="left:24px;top:661px;width:146px;height:18px;overflow:hidden"><div class="t b" style="left:0;top:0;color:#000;letter-spacing:0.44px">PcLockWorkstation...</div></div>
<div class="t" style="left:174px;top:661px;color:#000">0/2</div>
<div class="a" style="left:1px;top:681px;width:236px;height:22px;background:#e8e8e8"></div>
<div class="a" style="left:6px;top:683px;width:11px;height:16px"><svg class="q" width="11" height="16" viewBox="0 0 11 16"><path d="M1.5 4.7 C1.3 2.6 3.5 1.3 6 1.3 C8.6 1.3 10 2.7 10 4.5 C10 6.5 8.3 7.4 7.6 8.6 L7.1 11.2 L4.8 11.2 L4.9 8.6 C5.2 7 7 6.1 7 4.7 C7 3.9 6.5 3.5 5.9 3.5 C5.1 3.5 4.8 4.1 4.7 4.7 C4.5 5.7 3.7 6.1 2.9 6.1 C2.1 6.1 1.6 5.5 1.5 4.7 Z" fill="#e4dc5c" stroke="#1e1a00" stroke-width="1.2" stroke-linejoin="round"/><ellipse cx="5.95" cy="13.85" rx="2.75" ry="1.85" fill="#e4dc5c" stroke="#1e1a00" stroke-width="1.2"/></svg></div>
<div class="a" style="left:24px;top:683px;width:146px;height:18px;overflow:hidden"><div class="t b" style="left:0;top:0;color:#000;letter-spacing:0.653px">PcLogOffSystemT...</div></div>
<div class="t" style="left:174px;top:683px;color:#000">0/2</div>
<div class="a" style="left:1px;top:703px;width:236px;height:22px;background:#800000"></div>
<div class="a" style="left:6px;top:705px;width:11px;height:16px"><svg class="q" width="11" height="16" viewBox="0 0 11 16"><path d="M1.5 4.7 C1.3 2.6 3.5 1.3 6 1.3 C8.6 1.3 10 2.7 10 4.5 C10 6.5 8.3 7.4 7.6 8.6 L7.1 11.2 L4.8 11.2 L4.9 8.6 C5.2 7 7 6.1 7 4.7 C7 3.9 6.5 3.5 5.9 3.5 C5.1 3.5 4.8 4.1 4.7 4.7 C4.5 5.7 3.7 6.1 2.9 6.1 C2.1 6.1 1.6 5.5 1.5 4.7 Z" fill="#e2bc7c" stroke="#3c0000" stroke-width="1.2" stroke-linejoin="round"/><ellipse cx="5.95" cy="13.85" rx="2.75" ry="1.85" fill="#e2bc7c" stroke="#3c0000" stroke-width="1.2"/></svg></div>
<div class="a" style="left:24px;top:705px;width:146px;height:18px;overflow:hidden"><div class="t b" style="left:0;top:0;color:#fff4f0;letter-spacing:0.473px">PcMainWindow</div></div>
<div class="t" style="left:174px;top:705px;color:#fff4f0">0/82</div>
<div class="a" style="left:1px;top:725px;width:236px;height:22px;background:#e8e8e8"></div>
<div class="a" style="left:6px;top:727px;width:11px;height:16px"><svg class="q" width="11" height="16" viewBox="0 0 11 16"><path d="M1.5 4.7 C1.3 2.6 3.5 1.3 6 1.3 C8.6 1.3 10 2.7 10 4.5 C10 6.5 8.3 7.4 7.6 8.6 L7.1 11.2 L4.8 11.2 L4.9 8.6 C5.2 7 7 6.1 7 4.7 C7 3.9 6.5 3.5 5.9 3.5 C5.1 3.5 4.8 4.1 4.7 4.7 C4.5 5.7 3.7 6.1 2.9 6.1 C2.1 6.1 1.6 5.5 1.5 4.7 Z" fill="#e4dc5c" stroke="#1e1a00" stroke-width="1.2" stroke-linejoin="round"/><ellipse cx="5.95" cy="13.85" rx="2.75" ry="1.85" fill="#e4dc5c" stroke="#1e1a00" stroke-width="1.2"/></svg></div>
<div class="a" style="left:24px;top:727px;width:146px;height:18px;overflow:hidden"><div class="t b" style="left:0;top:0;color:#000;letter-spacing:0.712px">PcManualWizardP...</div></div>
<div class="t" style="left:174px;top:727px;color:#000">0/5</div>
<div class="a" style="left:1px;top:747px;width:236px;height:22px;background:#ffffff"></div>
<div class="a" style="left:6px;top:749px;width:11px;height:16px"><svg class="q" width="11" height="16" viewBox="0 0 11 16"><path d="M1.5 4.7 C1.3 2.6 3.5 1.3 6 1.3 C8.6 1.3 10 2.7 10 4.5 C10 6.5 8.3 7.4 7.6 8.6 L7.1 11.2 L4.8 11.2 L4.9 8.6 C5.2 7 7 6.1 7 4.7 C7 3.9 6.5 3.5 5.9 3.5 C5.1 3.5 4.8 4.1 4.7 4.7 C4.5 5.7 3.7 6.1 2.9 6.1 C2.1 6.1 1.6 5.5 1.5 4.7 Z" fill="#e4dc5c" stroke="#1e1a00" stroke-width="1.2" stroke-linejoin="round"/><ellipse cx="5.95" cy="13.85" rx="2.75" ry="1.85" fill="#e4dc5c" stroke="#1e1a00" stroke-width="1.2"/></svg></div>
<div class="a" style="left:24px;top:749px;width:146px;height:18px;overflow:hidden"><div class="t b" style="left:0;top:0;color:#000;letter-spacing:0.447px">PcMessageBoxTask</div></div>
<div class="t" style="left:174px;top:749px;color:#000">0/2</div>
<div class="a" style="left:1px;top:769px;width:236px;height:22px;background:#e8e8e8"></div>
<div class="a" style="left:6px;top:771px;width:11px;height:16px"><svg class="q" width="11" height="16" viewBox="0 0 11 16"><path d="M1.5 4.7 C1.3 2.6 3.5 1.3 6 1.3 C8.6 1.3 10 2.7 10 4.5 C10 6.5 8.3 7.4 7.6 8.6 L7.1 11.2 L4.8 11.2 L4.9 8.6 C5.2 7 7 6.1 7 4.7 C7 3.9 6.5 3.5 5.9 3.5 C5.1 3.5 4.8 4.1 4.7 4.7 C4.5 5.7 3.7 6.1 2.9 6.1 C2.1 6.1 1.6 5.5 1.5 4.7 Z" fill="#e4dc5c" stroke="#1e1a00" stroke-width="1.2" stroke-linejoin="round"/><ellipse cx="5.95" cy="13.85" rx="2.75" ry="1.85" fill="#e4dc5c" stroke="#1e1a00" stroke-width="1.2"/></svg></div>
<div class="a" style="left:24px;top:771px;width:146px;height:18px;overflow:hidden"><div class="t b" style="left:0;top:0;color:#000;letter-spacing:0.436px">PcMessageDialog</div></div>
<div class="t" style="left:174px;top:771px;color:#000">0/4</div>
<div class="a" style="left:1px;top:791px;width:236px;height:22px;background:#ffffff"></div>
<div class="a" style="left:6px;top:793px;width:11px;height:16px"><svg class="q" width="11" height="16" viewBox="0 0 11 16"><path d="M1.5 4.7 C1.3 2.6 3.5 1.3 6 1.3 C8.6 1.3 10 2.7 10 4.5 C10 6.5 8.3 7.4 7.6 8.6 L7.1 11.2 L4.8 11.2 L4.9 8.6 C5.2 7 7 6.1 7 4.7 C7 3.9 6.5 3.5 5.9 3.5 C5.1 3.5 4.8 4.1 4.7 4.7 C4.5 5.7 3.7 6.1 2.9 6.1 C2.1 6.1 1.6 5.5 1.5 4.7 Z" fill="#e4dc5c" stroke="#1e1a00" stroke-width="1.2" stroke-linejoin="round"/><ellipse cx="5.95" cy="13.85" rx="2.75" ry="1.85" fill="#e4dc5c" stroke="#1e1a00" stroke-width="1.2"/></svg></div>
<div class="a" style="left:24px;top:793px;width:146px;height:18px;overflow:hidden"><div class="t b" style="left:0;top:0;color:#000;letter-spacing:0.556px">PcMessageEditDia...</div></div>
<div class="t" style="left:174px;top:793px;color:#000">0/8</div>
<div class="a" style="left:1px;top:813px;width:236px;height:22px;background:#e8e8e8"></div>
<div class="a" style="left:6px;top:815px;width:11px;height:16px"><svg class="q" width="11" height="16" viewBox="0 0 11 16"><path d="M1.5 4.7 C1.3 2.6 3.5 1.3 6 1.3 C8.6 1.3 10 2.7 10 4.5 C10 6.5 8.3 7.4 7.6 8.6 L7.1 11.2 L4.8 11.2 L4.9 8.6 C5.2 7 7 6.1 7 4.7 C7 3.9 6.5 3.5 5.9 3.5 C5.1 3.5 4.8 4.1 4.7 4.7 C4.5 5.7 3.7 6.1 2.9 6.1 C2.1 6.1 1.6 5.5 1.5 4.7 Z" fill="#e4dc5c" stroke="#1e1a00" stroke-width="1.2" stroke-linejoin="round"/><ellipse cx="5.95" cy="13.85" rx="2.75" ry="1.85" fill="#e4dc5c" stroke="#1e1a00" stroke-width="1.2"/></svg></div>
<div class="a" style="left:24px;top:815px;width:146px;height:18px;overflow:hidden"><div class="t b" style="left:0;top:0;color:#000;letter-spacing:0.485px">PcMonthlyAlarm</div></div>
<div class="t" style="left:174px;top:815px;color:#000">0/4</div>
<div class="a" style="left:237px;top:101px;width:16px;height:740px;background:#e4dccb"></div>
<div class="a" style="left:237px;top:741px;width:16px;height:100px;background:repeating-conic-gradient(#f4efe4 0 25%, #d8d0bc 0 50%) 0 0/2px 2px"></div>
<div class="a" style="left:237px;top:101px;width:16px;height:16px;border:1px solid #8a8474;border-radius:2px;background:linear-gradient(#e6e0d0,#d2cbb8)"></div>
<div class="a" style="left:241px;top:106px;width:0;height:0;border-left:4px solid transparent;border-right:4px solid transparent;border-bottom:5px solid #000"></div>
<div class="a" style="left:237px;top:117px;width:16px;height:625px;border:1px solid #7d7868;background:#ddd5c1"></div>
<div class="a" style="left:240px;top:421px;width:2px;height:2px;background:#fff"></div>
<div class="a" style="left:240px;top:421px;width:1px;height:1px;background:#8a8474"></div>
<div class="a" style="left:244px;top:421px;width:2px;height:2px;background:#fff"></div>
<div class="a" style="left:244px;top:421px;width:1px;height:1px;background:#8a8474"></div>
<div class="a" style="left:248px;top:421px;width:2px;height:2px;background:#fff"></div>
<div class="a" style="left:248px;top:421px;width:1px;height:1px;background:#8a8474"></div>
<div class="a" style="left:240px;top:425px;width:2px;height:2px;background:#fff"></div>
<div class="a" style="left:240px;top:425px;width:1px;height:1px;background:#8a8474"></div>
<div class="a" style="left:244px;top:425px;width:2px;height:2px;background:#fff"></div>
<div class="a" style="left:244px;top:425px;width:1px;height:1px;background:#8a8474"></div>
<div class="a" style="left:248px;top:425px;width:2px;height:2px;background:#fff"></div>
<div class="a" style="left:248px;top:425px;width:1px;height:1px;background:#8a8474"></div>
<div class="a" style="left:240px;top:429px;width:2px;height:2px;background:#fff"></div>
<div class="a" style="left:240px;top:429px;width:1px;height:1px;background:#8a8474"></div>
<div class="a" style="left:244px;top:429px;width:2px;height:2px;background:#fff"></div>
<div class="a" style="left:244px;top:429px;width:1px;height:1px;background:#8a8474"></div>
<div class="a" style="left:248px;top:429px;width:2px;height:2px;background:#fff"></div>
<div class="a" style="left:248px;top:429px;width:1px;height:1px;background:#8a8474"></div>
<div class="a" style="left:240px;top:433px;width:2px;height:2px;background:#fff"></div>
<div class="a" style="left:240px;top:433px;width:1px;height:1px;background:#8a8474"></div>
<div class="a" style="left:244px;top:433px;width:2px;height:2px;background:#fff"></div>
<div class="a" style="left:244px;top:433px;width:1px;height:1px;background:#8a8474"></div>
<div class="a" style="left:248px;top:433px;width:2px;height:2px;background:#fff"></div>
<div class="a" style="left:248px;top:433px;width:1px;height:1px;background:#8a8474"></div>
<div class="a" style="left:240px;top:437px;width:2px;height:2px;background:#fff"></div>
<div class="a" style="left:240px;top:437px;width:1px;height:1px;background:#8a8474"></div>
<div class="a" style="left:244px;top:437px;width:2px;height:2px;background:#fff"></div>
<div class="a" style="left:244px;top:437px;width:1px;height:1px;background:#8a8474"></div>
<div class="a" style="left:248px;top:437px;width:2px;height:2px;background:#fff"></div>
<div class="a" style="left:248px;top:437px;width:1px;height:1px;background:#8a8474"></div>
<div class="a" style="left:253px;top:101px;width:1px;height:740px;background:#d8d0bc"></div>
<div class="a" style="left:257px;top:376px;width:4px;height:301px;background:repeating-linear-gradient(135deg,#f6f0e2 0 1.2px,#a49e8c 1.2px 2.4px)"></div>
<div class="a" style="left:262px;top:99px;width:680px;height:582px;border:1px solid #7d7868;border-radius:3px;background:#fff"></div>
<div class="a" style="left:263px;top:100px;width:680px;height:1px;background:#a29a88"></div>
<div class="a" style="left:263px;top:101px;width:680px;height:1px;background:#7d7868"></div>
<div class="hd" style="left:263px;top:102px;width:680px;height:28px"></div>
<div class="a" style="left:263px;top:130px;width:680px;height:1px;background:#7d7868"></div>
<div class="a" style="left:282px;top:101px;width:2px;height:30px;background:#7d7868"></div>
<div class="a" style="left:582px;top:101px;width:2px;height:30px;background:#7d7868"></div>
<div class="a" style="left:267px;top:110px"><svg width="14" height="14" viewBox="0 0 14 14"><path d="M2 7.6 L5.3 11 L12 1.9" fill="none" stroke="#8a8a8a" stroke-width="3.2" stroke-linejoin="round" stroke-linecap="round"/><path d="M2 7.6 L5.3 11 L12 1.9" fill="none" stroke="#e6e6e6" stroke-width="1.3" stroke-linejoin="round" stroke-linecap="round"/></svg></div>
<div class="t" style="left:287px;top:107px">Source text</div>
<div class="t" style="left:587px;top:107px">Translation</div>
<div class="a" style="left:263px;top:131px;width:680px;height:22px;background:#800000"></div>
<div class="a" style="left:268px;top:133px;width:11px;height:16px"><svg class="q" width="11" height="16" viewBox="0 0 11 16"><path d="M1.5 4.7 C1.3 2.6 3.5 1.3 6 1.3 C8.6 1.3 10 2.7 10 4.5 C10 6.5 8.3 7.4 7.6 8.6 L7.1 11.2 L4.8 11.2 L4.9 8.6 C5.2 7 7 6.1 7 4.7 C7 3.9 6.5 3.5 5.9 3.5 C5.1 3.5 4.8 4.1 4.7 4.7 C4.5 5.7 3.7 6.1 2.9 6.1 C2.1 6.1 1.6 5.5 1.5 4.7 Z" fill="#e2bc7c" stroke="#3c0000" stroke-width="1.2" stroke-linejoin="round"/><ellipse cx="5.95" cy="13.85" rx="2.75" ry="1.85" fill="#e2bc7c" stroke="#3c0000" stroke-width="1.2"/></svg></div>
<div class="t" style="left:285px;top:133px;color:#fff4f0;letter-spacing:0.82px">Clocks</div>
<div class="t" style="left:585px;top:133px;color:#fff4f0;letter-spacing:0.486px">Horloges</div>
<div class="a" style="left:268px;top:155px;width:11px;height:16px"><svg class="q" width="11" height="16" viewBox="0 0 11 16"><path d="M1.5 4.7 C1.3 2.6 3.5 1.3 6 1.3 C8.6 1.3 10 2.7 10 4.5 C10 6.5 8.3 7.4 7.6 8.6 L7.1 11.2 L4.8 11.2 L4.9 8.6 C5.2 7 7 6.1 7 4.7 C7 3.9 6.5 3.5 5.9 3.5 C5.1 3.5 4.8 4.1 4.7 4.7 C4.5 5.7 3.7 6.1 2.9 6.1 C2.1 6.1 1.6 5.5 1.5 4.7 Z" fill="#e4dc5c" stroke="#1e1a00" stroke-width="1.2" stroke-linejoin="round"/><ellipse cx="5.95" cy="13.85" rx="2.75" ry="1.85" fill="#e4dc5c" stroke="#1e1a00" stroke-width="1.2"/></svg></div>
<div class="t" style="left:285px;top:155px;color:#000;letter-spacing:0.56px">Alarms</div>
<div class="t" style="left:585px;top:155px;color:#000;letter-spacing:0.483px">Alarmes</div>
<div class="a" style="left:268px;top:177px;width:11px;height:16px"><svg class="q" width="11" height="16" viewBox="0 0 11 16"><path d="M1.5 4.7 C1.3 2.6 3.5 1.3 6 1.3 C8.6 1.3 10 2.7 10 4.5 C10 6.5 8.3 7.4 7.6 8.6 L7.1 11.2 L4.8 11.2 L4.9 8.6 C5.2 7 7 6.1 7 4.7 C7 3.9 6.5 3.5 5.9 3.5 C5.1 3.5 4.8 4.1 4.7 4.7 C4.5 5.7 3.7 6.1 2.9 6.1 C2.1 6.1 1.6 5.5 1.5 4.7 Z" fill="#e4dc5c" stroke="#1e1a00" stroke-width="1.2" stroke-linejoin="round"/><ellipse cx="5.95" cy="13.85" rx="2.75" ry="1.85" fill="#e4dc5c" stroke="#1e1a00" stroke-width="1.2"/></svg></div>
<div class="t" style="left:285px;top:177px;color:#000;letter-spacing:0.486px">Settings</div>
<div class="t" style="left:585px;top:177px;color:#000;letter-spacing:0.6px">Paramètres</div>
<div class="a" style="left:268px;top:199px;width:11px;height:16px"><svg class="q" width="11" height="16" viewBox="0 0 11 16"><path d="M1.5 4.7 C1.3 2.6 3.5 1.3 6 1.3 C8.6 1.3 10 2.7 10 4.5 C10 6.5 8.3 7.4 7.6 8.6 L7.1 11.2 L4.8 11.2 L4.9 8.6 C5.2 7 7 6.1 7 4.7 C7 3.9 6.5 3.5 5.9 3.5 C5.1 3.5 4.8 4.1 4.7 4.7 C4.5 5.7 3.7 6.1 2.9 6.1 C2.1 6.1 1.6 5.5 1.5 4.7 Z" fill="#e4dc5c" stroke="#1e1a00" stroke-width="1.2" stroke-linejoin="round"/><ellipse cx="5.95" cy="13.85" rx="2.75" ry="1.85" fill="#e4dc5c" stroke="#1e1a00" stroke-width="1.2"/></svg></div>
<div class="t" style="left:285px;top:199px;color:#000;letter-spacing:0.617px">General</div>
<div class="t" style="left:585px;top:199px;color:#000;letter-spacing:0.667px">Général</div>
<div class="a" style="left:268px;top:221px;width:11px;height:16px"><svg class="q" width="11" height="16" viewBox="0 0 11 16"><path d="M1.5 4.7 C1.3 2.6 3.5 1.3 6 1.3 C8.6 1.3 10 2.7 10 4.5 C10 6.5 8.3 7.4 7.6 8.6 L7.1 11.2 L4.8 11.2 L4.9 8.6 C5.2 7 7 6.1 7 4.7 C7 3.9 6.5 3.5 5.9 3.5 C5.1 3.5 4.8 4.1 4.7 4.7 C4.5 5.7 3.7 6.1 2.9 6.1 C2.1 6.1 1.6 5.5 1.5 4.7 Z" fill="#e4dc5c" stroke="#1e1a00" stroke-width="1.2" stroke-linejoin="round"/><ellipse cx="5.95" cy="13.85" rx="2.75" ry="1.85" fill="#e4dc5c" stroke="#1e1a00" stroke-width="1.2"/></svg></div>
<div class="t" style="left:285px;top:221px;color:#000;letter-spacing:0.412px">Launch Clock-on-Desktop on startup</div>
<div class="t" style="left:585px;top:221px;color:#000;letter-spacing:0.423px">Lancer Clock-on-Desktop au démarrage</div>
<div class="a" style="left:268px;top:243px;width:11px;height:16px"><svg class="q" width="11" height="16" viewBox="0 0 11 16"><path d="M1.5 4.7 C1.3 2.6 3.5 1.3 6 1.3 C8.6 1.3 10 2.7 10 4.5 C10 6.5 8.3 7.4 7.6 8.6 L7.1 11.2 L4.8 11.2 L4.9 8.6 C5.2 7 7 6.1 7 4.7 C7 3.9 6.5 3.5 5.9 3.5 C5.1 3.5 4.8 4.1 4.7 4.7 C4.5 5.7 3.7 6.1 2.9 6.1 C2.1 6.1 1.6 5.5 1.5 4.7 Z" fill="#e4dc5c" stroke="#1e1a00" stroke-width="1.2" stroke-linejoin="round"/><ellipse cx="5.95" cy="13.85" rx="2.75" ry="1.85" fill="#e4dc5c" stroke="#1e1a00" stroke-width="1.2"/></svg></div>
<div class="t" style="left:285px;top:243px;color:#000;letter-spacing:0.353px">Check for program updates daily</div>
<div class="t" style="left:585px;top:243px;color:#000;letter-spacing:0.322px">Vérifier les mises à jour du programme chaque jour</div>
<div class="a" style="left:268px;top:265px;width:11px;height:16px"><svg class="q" width="11" height="16" viewBox="0 0 11 16"><path d="M1.5 4.7 C1.3 2.6 3.5 1.3 6 1.3 C8.6 1.3 10 2.7 10 4.5 C10 6.5 8.3 7.4 7.6 8.6 L7.1 11.2 L4.8 11.2 L4.9 8.6 C5.2 7 7 6.1 7 4.7 C7 3.9 6.5 3.5 5.9 3.5 C5.1 3.5 4.8 4.1 4.7 4.7 C4.5 5.7 3.7 6.1 2.9 6.1 C2.1 6.1 1.6 5.5 1.5 4.7 Z" fill="#e4dc5c" stroke="#1e1a00" stroke-width="1.2" stroke-linejoin="round"/><ellipse cx="5.95" cy="13.85" rx="2.75" ry="1.85" fill="#e4dc5c" stroke="#1e1a00" stroke-width="1.2"/></svg></div>
<div class="t" style="left:285px;top:265px;color:#000;letter-spacing:0.414px">Language</div>
<div class="t" style="left:585px;top:265px;color:#000;letter-spacing:0.66px">Langue</div>
<div class="a" style="left:268px;top:287px;width:11px;height:16px"><svg class="q" width="11" height="16" viewBox="0 0 11 16"><path d="M1.5 4.7 C1.3 2.6 3.5 1.3 6 1.3 C8.6 1.3 10 2.7 10 4.5 C10 6.5 8.3 7.4 7.6 8.6 L7.1 11.2 L4.8 11.2 L4.9 8.6 C5.2 7 7 6.1 7 4.7 C7 3.9 6.5 3.5 5.9 3.5 C5.1 3.5 4.8 4.1 4.7 4.7 C4.5 5.7 3.7 6.1 2.9 6.1 C2.1 6.1 1.6 5.5 1.5 4.7 Z" fill="#e4dc5c" stroke="#1e1a00" stroke-width="1.2" stroke-linejoin="round"/><ellipse cx="5.95" cy="13.85" rx="2.75" ry="1.85" fill="#e4dc5c" stroke="#1e1a00" stroke-width="1.2"/></svg></div>
<div class="t" style="left:285px;top:287px;color:#000;letter-spacing:0.5px">Play tic-tac</div>
<div class="t" style="left:585px;top:287px;color:#000;letter-spacing:0.408px">Jouer tic-tac</div>
<div class="a" style="left:268px;top:309px;width:11px;height:16px"><svg class="q" width="11" height="16" viewBox="0 0 11 16"><path d="M1.5 4.7 C1.3 2.6 3.5 1.3 6 1.3 C8.6 1.3 10 2.7 10 4.5 C10 6.5 8.3 7.4 7.6 8.6 L7.1 11.2 L4.8 11.2 L4.9 8.6 C5.2 7 7 6.1 7 4.7 C7 3.9 6.5 3.5 5.9 3.5 C5.1 3.5 4.8 4.1 4.7 4.7 C4.5 5.7 3.7 6.1 2.9 6.1 C2.1 6.1 1.6 5.5 1.5 4.7 Z" fill="#e4dc5c" stroke="#1e1a00" stroke-width="1.2" stroke-linejoin="round"/><ellipse cx="5.95" cy="13.85" rx="2.75" ry="1.85" fill="#e4dc5c" stroke="#1e1a00" stroke-width="1.2"/></svg></div>
<div class="t" style="left:285px;top:309px;color:#000;letter-spacing:0.505px">Play cuckoo every hour</div>
<div class="t" style="left:585px;top:309px;color:#000;letter-spacing:0.335px">Jouer "coucou" chaque heure</div>
<div class="a" style="left:268px;top:331px;width:11px;height:16px"><svg class="q" width="11" height="16" viewBox="0 0 11 16"><path d="M1.5 4.7 C1.3 2.6 3.5 1.3 6 1.3 C8.6 1.3 10 2.7 10 4.5 C10 6.5 8.3 7.4 7.6 8.6 L7.1 11.2 L4.8 11.2 L4.9 8.6 C5.2 7 7 6.1 7 4.7 C7 3.9 6.5 3.5 5.9 3.5 C5.1 3.5 4.8 4.1 4.7 4.7 C4.5 5.7 3.7 6.1 2.9 6.1 C2.1 6.1 1.6 5.5 1.5 4.7 Z" fill="#e4dc5c" stroke="#1e1a00" stroke-width="1.2" stroke-linejoin="round"/><ellipse cx="5.95" cy="13.85" rx="2.75" ry="1.85" fill="#e4dc5c" stroke="#1e1a00" stroke-width="1.2"/></svg></div>
<div class="t" style="left:285px;top:331px;color:#000;letter-spacing:0.454px">Disable alarms</div>
<div class="t" style="left:585px;top:331px;color:#000;letter-spacing:0.481px">Désactiver les alarmes</div>
<div class="a" style="left:268px;top:353px;width:11px;height:16px"><svg class="q" width="11" height="16" viewBox="0 0 11 16"><path d="M1.5 4.7 C1.3 2.6 3.5 1.3 6 1.3 C8.6 1.3 10 2.7 10 4.5 C10 6.5 8.3 7.4 7.6 8.6 L7.1 11.2 L4.8 11.2 L4.9 8.6 C5.2 7 7 6.1 7 4.7 C7 3.9 6.5 3.5 5.9 3.5 C5.1 3.5 4.8 4.1 4.7 4.7 C4.5 5.7 3.7 6.1 2.9 6.1 C2.1 6.1 1.6 5.5 1.5 4.7 Z" fill="#e4dc5c" stroke="#1e1a00" stroke-width="1.2" stroke-linejoin="round"/><ellipse cx="5.95" cy="13.85" rx="2.75" ry="1.85" fill="#e4dc5c" stroke="#1e1a00" stroke-width="1.2"/></svg></div>
<div class="t" style="left:285px;top:353px;color:#000;letter-spacing:0.444px">Show skipped alarms</div>
<div class="t" style="left:585px;top:353px;color:#000;letter-spacing:0.336px">Afficher les alarmes ignorées</div>
<div class="a" style="left:268px;top:375px;width:11px;height:16px"><svg class="q" width="11" height="16" viewBox="0 0 11 16"><path d="M1.5 4.7 C1.3 2.6 3.5 1.3 6 1.3 C8.6 1.3 10 2.7 10 4.5 C10 6.5 8.3 7.4 7.6 8.6 L7.1 11.2 L4.8 11.2 L4.9 8.6 C5.2 7 7 6.1 7 4.7 C7 3.9 6.5 3.5 5.9 3.5 C5.1 3.5 4.8 4.1 4.7 4.7 C4.5 5.7 3.7 6.1 2.9 6.1 C2.1 6.1 1.6 5.5 1.5 4.7 Z" fill="#e4dc5c" stroke="#1e1a00" stroke-width="1.2" stroke-linejoin="round"/><ellipse cx="5.95" cy="13.85" rx="2.75" ry="1.85" fill="#e4dc5c" stroke="#1e1a00" stroke-width="1.2"/></svg></div>
<div class="t" style="left:285px;top:375px;color:#000;letter-spacing:0.9px">Sync</div>
<div class="t" style="left:585px;top:375px;color:#000;letter-spacing:0.9px">Sync</div>
<div class="a" style="left:268px;top:397px;width:11px;height:16px"><svg class="q" width="11" height="16" viewBox="0 0 11 16"><path d="M1.5 4.7 C1.3 2.6 3.5 1.3 6 1.3 C8.6 1.3 10 2.7 10 4.5 C10 6.5 8.3 7.4 7.6 8.6 L7.1 11.2 L4.8 11.2 L4.9 8.6 C5.2 7 7 6.1 7 4.7 C7 3.9 6.5 3.5 5.9 3.5 C5.1 3.5 4.8 4.1 4.7 4.7 C4.5 5.7 3.7 6.1 2.9 6.1 C2.1 6.1 1.6 5.5 1.5 4.7 Z" fill="#e4dc5c" stroke="#1e1a00" stroke-width="1.2" stroke-linejoin="round"/><ellipse cx="5.95" cy="13.85" rx="2.75" ry="1.85" fill="#e4dc5c" stroke="#1e1a00" stroke-width="1.2"/></svg></div>
<div class="t" style="left:285px;top:397px;color:#000;letter-spacing:0.689px">Local Time</div>
<div class="t" style="left:585px;top:397px;color:#000;letter-spacing:0.436px">Heure Locale</div>
<div class="a" style="left:268px;top:419px;width:11px;height:16px"><svg class="q" width="11" height="16" viewBox="0 0 11 16"><path d="M1.5 4.7 C1.3 2.6 3.5 1.3 6 1.3 C8.6 1.3 10 2.7 10 4.5 C10 6.5 8.3 7.4 7.6 8.6 L7.1 11.2 L4.8 11.2 L4.9 8.6 C5.2 7 7 6.1 7 4.7 C7 3.9 6.5 3.5 5.9 3.5 C5.1 3.5 4.8 4.1 4.7 4.7 C4.5 5.7 3.7 6.1 2.9 6.1 C2.1 6.1 1.6 5.5 1.5 4.7 Z" fill="#e4dc5c" stroke="#1e1a00" stroke-width="1.2" stroke-linejoin="round"/><ellipse cx="5.95" cy="13.85" rx="2.75" ry="1.85" fill="#e4dc5c" stroke="#1e1a00" stroke-width="1.2"/></svg></div>
<div class="t" style="left:285px;top:419px;color:#000;letter-spacing:0.61px">Synchronize</div>
<div class="t" style="left:585px;top:419px;color:#000;letter-spacing:0.5px">Synchroniser</div>
<div class="a" style="left:268px;top:441px;width:11px;height:16px"><svg class="q" width="11" height="16" viewBox="0 0 11 16"><path d="M1.5 4.7 C1.3 2.6 3.5 1.3 6 1.3 C8.6 1.3 10 2.7 10 4.5 C10 6.5 8.3 7.4 7.6 8.6 L7.1 11.2 L4.8 11.2 L4.9 8.6 C5.2 7 7 6.1 7 4.7 C7 3.9 6.5 3.5 5.9 3.5 C5.1 3.5 4.8 4.1 4.7 4.7 C4.5 5.7 3.7 6.1 2.9 6.1 C2.1 6.1 1.6 5.5 1.5 4.7 Z" fill="#e4dc5c" stroke="#1e1a00" stroke-width="1.2" stroke-linejoin="round"/><ellipse cx="5.95" cy="13.85" rx="2.75" ry="1.85" fill="#e4dc5c" stroke="#1e1a00" stroke-width="1.2"/></svg></div>
<div class="t" style="left:285px;top:441px;color:#000;letter-spacing:0.621px">NTP Server Time</div>
<div class="t" style="left:585px;top:441px;color:#000;letter-spacing:0.4px">Heure du Serveur NTP</div>
<div class="a" style="left:268px;top:463px;width:11px;height:16px"><svg class="q" width="11" height="16" viewBox="0 0 11 16"><path d="M1.5 4.7 C1.3 2.6 3.5 1.3 6 1.3 C8.6 1.3 10 2.7 10 4.5 C10 6.5 8.3 7.4 7.6 8.6 L7.1 11.2 L4.8 11.2 L4.9 8.6 C5.2 7 7 6.1 7 4.7 C7 3.9 6.5 3.5 5.9 3.5 C5.1 3.5 4.8 4.1 4.7 4.7 C4.5 5.7 3.7 6.1 2.9 6.1 C2.1 6.1 1.6 5.5 1.5 4.7 Z" fill="#e4dc5c" stroke="#1e1a00" stroke-width="1.2" stroke-linejoin="round"/><ellipse cx="5.95" cy="13.85" rx="2.75" ry="1.85" fill="#e4dc5c" stroke="#1e1a00" stroke-width="1.2"/></svg></div>
<div class="t" style="left:285px;top:463px;color:#000;letter-spacing:0.445px">Time retrieve status:</div>
<div class="t" style="left:585px;top:463px;color:#000;letter-spacing:0.259px">Etat de la récupération de l'heure:</div>
<div class="a" style="left:268px;top:485px;width:11px;height:16px"><svg class="q" width="11" height="16" viewBox="0 0 11 16"><path d="M1.5 4.7 C1.3 2.6 3.5 1.3 6 1.3 C8.6 1.3 10 2.7 10 4.5 C10 6.5 8.3 7.4 7.6 8.6 L7.1 11.2 L4.8 11.2 L4.9 8.6 C5.2 7 7 6.1 7 4.7 C7 3.9 6.5 3.5 5.9 3.5 C5.1 3.5 4.8 4.1 4.7 4.7 C4.5 5.7 3.7 6.1 2.9 6.1 C2.1 6.1 1.6 5.5 1.5 4.7 Z" fill="#e4dc5c" stroke="#1e1a00" stroke-width="1.2" stroke-linejoin="round"/><ellipse cx="5.95" cy="13.85" rx="2.75" ry="1.85" fill="#e4dc5c" stroke="#1e1a00" stroke-width="1.2"/></svg></div>
<div class="t" style="left:285px;top:485px;color:#000;letter-spacing:0.415px">Connecting to NTP server...</div>
<div class="t" style="left:585px;top:485px;color:#000;letter-spacing:0.477px">Connexion au serveur NTP...</div>
<div class="a" style="left:268px;top:507px;width:11px;height:16px"><svg class="q" width="11" height="16" viewBox="0 0 11 16"><path d="M1.5 4.7 C1.3 2.6 3.5 1.3 6 1.3 C8.6 1.3 10 2.7 10 4.5 C10 6.5 8.3 7.4 7.6 8.6 L7.1 11.2 L4.8 11.2 L4.9 8.6 C5.2 7 7 6.1 7 4.7 C7 3.9 6.5 3.5 5.9 3.5 C5.1 3.5 4.8 4.1 4.7 4.7 C4.5 5.7 3.7 6.1 2.9 6.1 C2.1 6.1 1.6 5.5 1.5 4.7 Z" fill="#e4dc5c" stroke="#1e1a00" stroke-width="1.2" stroke-linejoin="round"/><ellipse cx="5.95" cy="13.85" rx="2.75" ry="1.85" fill="#e4dc5c" stroke="#1e1a00" stroke-width="1.2"/></svg></div>
<div class="t" style="left:285px;top:507px;color:#000;letter-spacing:0.559px">Primary NTP Server</div>
<div class="t" style="left:585px;top:507px;color:#000;letter-spacing:0.558px">Serveur NTP Primaire</div>
<div class="a" style="left:268px;top:529px;width:11px;height:16px"><svg class="q" width="11" height="16" viewBox="0 0 11 16"><path d="M1.5 4.7 C1.3 2.6 3.5 1.3 6 1.3 C8.6 1.3 10 2.7 10 4.5 C10 6.5 8.3 7.4 7.6 8.6 L7.1 11.2 L4.8 11.2 L4.9 8.6 C5.2 7 7 6.1 7 4.7 C7 3.9 6.5 3.5 5.9 3.5 C5.1 3.5 4.8 4.1 4.7 4.7 C4.5 5.7 3.7 6.1 2.9 6.1 C2.1 6.1 1.6 5.5 1.5 4.7 Z" fill="#e4dc5c" stroke="#1e1a00" stroke-width="1.2" stroke-linejoin="round"/><ellipse cx="5.95" cy="13.85" rx="2.75" ry="1.85" fill="#e4dc5c" stroke="#1e1a00" stroke-width="1.2"/></svg></div>
<div class="t" style="left:285px;top:529px;color:#000;letter-spacing:0.75px">Add</div>
<div class="t" style="left:585px;top:529px;color:#000;letter-spacing:0.283px">Ajouter</div>
<div class="a" style="left:268px;top:551px;width:11px;height:16px"><svg class="q" width="11" height="16" viewBox="0 0 11 16"><path d="M1.5 4.7 C1.3 2.6 3.5 1.3 6 1.3 C8.6 1.3 10 2.7 10 4.5 C10 6.5 8.3 7.4 7.6 8.6 L7.1 11.2 L4.8 11.2 L4.9 8.6 C5.2 7 7 6.1 7 4.7 C7 3.9 6.5 3.5 5.9 3.5 C5.1 3.5 4.8 4.1 4.7 4.7 C4.5 5.7 3.7 6.1 2.9 6.1 C2.1 6.1 1.6 5.5 1.5 4.7 Z" fill="#e4dc5c" stroke="#1e1a00" stroke-width="1.2" stroke-linejoin="round"/><ellipse cx="5.95" cy="13.85" rx="2.75" ry="1.85" fill="#e4dc5c" stroke="#1e1a00" stroke-width="1.2"/></svg></div>
<div class="t" style="left:285px;top:551px;color:#000;letter-spacing:0.633px">Edit</div>
<div class="t" style="left:585px;top:551px;color:#000;letter-spacing:0.329px">Modifier</div>
<div class="a" style="left:268px;top:573px;width:11px;height:16px"><svg class="q" width="11" height="16" viewBox="0 0 11 16"><path d="M1.5 4.7 C1.3 2.6 3.5 1.3 6 1.3 C8.6 1.3 10 2.7 10 4.5 C10 6.5 8.3 7.4 7.6 8.6 L7.1 11.2 L4.8 11.2 L4.9 8.6 C5.2 7 7 6.1 7 4.7 C7 3.9 6.5 3.5 5.9 3.5 C5.1 3.5 4.8 4.1 4.7 4.7 C4.5 5.7 3.7 6.1 2.9 6.1 C2.1 6.1 1.6 5.5 1.5 4.7 Z" fill="#e4dc5c" stroke="#1e1a00" stroke-width="1.2" stroke-linejoin="round"/><ellipse cx="5.95" cy="13.85" rx="2.75" ry="1.85" fill="#e4dc5c" stroke="#1e1a00" stroke-width="1.2"/></svg></div>
<div class="t" style="left:285px;top:573px;color:#000;letter-spacing:0.9px">Remove</div>
<div class="t" style="left:585px;top:573px;color:#000;letter-spacing:0.475px">Supprimer</div>
<div class="a" style="left:268px;top:595px;width:11px;height:16px"><svg class="q" width="11" height="16" viewBox="0 0 11 16"><path d="M1.5 4.7 C1.3 2.6 3.5 1.3 6 1.3 C8.6 1.3 10 2.7 10 4.5 C10 6.5 8.3 7.4 7.6 8.6 L7.1 11.2 L4.8 11.2 L4.9 8.6 C5.2 7 7 6.1 7 4.7 C7 3.9 6.5 3.5 5.9 3.5 C5.1 3.5 4.8 4.1 4.7 4.7 C4.5 5.7 3.7 6.1 2.9 6.1 C2.1 6.1 1.6 5.5 1.5 4.7 Z" fill="#e4dc5c" stroke="#1e1a00" stroke-width="1.2" stroke-linejoin="round"/><ellipse cx="5.95" cy="13.85" rx="2.75" ry="1.85" fill="#e4dc5c" stroke="#1e1a00" stroke-width="1.2"/></svg></div>
<div class="t" style="left:285px;top:595px;color:#000;letter-spacing:0.411px">Adjust computer's time every</div>
<div class="t" style="left:585px;top:595px;color:#000;letter-spacing:0.243px">Ajuster l'heure de l'ordinateur chaque</div>
<div class="a" style="left:268px;top:617px;width:11px;height:16px"><svg class="q" width="11" height="16" viewBox="0 0 11 16"><path d="M1.5 4.7 C1.3 2.6 3.5 1.3 6 1.3 C8.6 1.3 10 2.7 10 4.5 C10 6.5 8.3 7.4 7.6 8.6 L7.1 11.2 L4.8 11.2 L4.9 8.6 C5.2 7 7 6.1 7 4.7 C7 3.9 6.5 3.5 5.9 3.5 C5.1 3.5 4.8 4.1 4.7 4.7 C4.5 5.7 3.7 6.1 2.9 6.1 C2.1 6.1 1.6 5.5 1.5 4.7 Z" fill="#e4dc5c" stroke="#1e1a00" stroke-width="1.2" stroke-linejoin="round"/><ellipse cx="5.95" cy="13.85" rx="2.75" ry="1.85" fill="#e4dc5c" stroke="#1e1a00" stroke-width="1.2"/></svg></div>
<div class="t" style="left:285px;top:617px;color:#000;letter-spacing:0.9px">min</div>
<div class="t" style="left:585px;top:617px;color:#000;letter-spacing:0.9px">min</div>
<div class="a" style="left:268px;top:639px;width:11px;height:16px"><svg class="q" width="11" height="16" viewBox="0 0 11 16"><path d="M1.5 4.7 C1.3 2.6 3.5 1.3 6 1.3 C8.6 1.3 10 2.7 10 4.5 C10 6.5 8.3 7.4 7.6 8.6 L7.1 11.2 L4.8 11.2 L4.9 8.6 C5.2 7 7 6.1 7 4.7 C7 3.9 6.5 3.5 5.9 3.5 C5.1 3.5 4.8 4.1 4.7 4.7 C4.5 5.7 3.7 6.1 2.9 6.1 C2.1 6.1 1.6 5.5 1.5 4.7 Z" fill="#e4dc5c" stroke="#1e1a00" stroke-width="1.2" stroke-linejoin="round"/><ellipse cx="5.95" cy="13.85" rx="2.75" ry="1.85" fill="#e4dc5c" stroke="#1e1a00" stroke-width="1.2"/></svg></div>
<div class="t" style="left:285px;top:639px;color:#000;letter-spacing:0.58px">Screensaver</div>
<div class="t" style="left:585px;top:639px;color:#000;letter-spacing:0.414px">Ecran de veille</div>
<div class="a" style="left:268px;top:661px;width:11px;height:16px"><svg class="q" width="11" height="16" viewBox="0 0 11 16"><path d="M1.5 4.7 C1.3 2.6 3.5 1.3 6 1.3 C8.6 1.3 10 2.7 10 4.5 C10 6.5 8.3 7.4 7.6 8.6 L7.1 11.2 L4.8 11.2 L4.9 8.6 C5.2 7 7 6.1 7 4.7 C7 3.9 6.5 3.5 5.9 3.5 C5.1 3.5 4.8 4.1 4.7 4.7 C4.5 5.7 3.7 6.1 2.9 6.1 C2.1 6.1 1.6 5.5 1.5 4.7 Z" fill="#e4dc5c" stroke="#1e1a00" stroke-width="1.2" stroke-linejoin="round"/><ellipse cx="5.95" cy="13.85" rx="2.75" ry="1.85" fill="#e4dc5c" stroke="#1e1a00" stroke-width="1.2"/></svg></div>
<div class="t" style="left:285px;top:661px;color:#000;letter-spacing:0.456px">Enable Clock-on-Desktop screensaver</div>
<div class="t" style="left:585px;top:661px;color:#000;letter-spacing:0.359px">Activer l'écran de veille de Clock-on-Desktop</div>
<div class="a" style="left:255px;top:681px;width:680px;height:6px;background:linear-gradient(#dcd2c0,#e4cbbd)"></div>
<div class="a" style="left:261px;top:686px;width:680px;height:139px;border:1px solid #e8c4b8"></div>
<div class="a" style="left:262px;top:687px;width:680px;height:137px;border:2px solid #6e0a0a;background:#fff"></div>
<div class="a" style="left:266px;top:692px;width:680px;height:140px;border:1px solid #000;border-radius:5px"></div>
<div class="t b" style="left:277px;top:705px;letter-spacing:0.3px">Source text</div>
<div class="t" style="left:279px;top:734px">Clocks</div>
<div class="t b" style="left:277px;top:764px">French translation</div>
<div class="a" style="left:277px;top:789px;width:680px;height:30px;border:1px solid #999;border-radius:3px;background:#fff"></div>
<div class="t" style="left:281px;top:795px">Horloges</div>
<div class="a" style="left:255px;top:824px;width:680px;height:20px;background:#d6cfba"></div>
<svg class="a" style="left:0;top:676px" width="927" height="158" viewBox="0 676 927 158">
<defs>
<pattern id="gripb1" x="810" y="682" width="5" height="10" patternUnits="userSpaceOnUse"><rect x="0" y="0" width="2" height="2" fill="#aaa48f"/><rect x="1" y="1" width="2" height="2" fill="#f2eee2"/></pattern>
<pattern id="gripb2" x="810" y="825" width="5" height="10" patternUnits="userSpaceOnUse"><rect x="0" y="0" width="2" height="2" fill="#aaa48f"/><rect x="1" y="1" width="2" height="2" fill="#f2eee2"/></pattern>
</defs>
<rect x="810" y="682" width="117" height="4" fill="url(#gripb1)"/>
<rect x="810" y="825" width="117" height="4" fill="url(#gripb2)"/>
</svg>
</div></body></html>
